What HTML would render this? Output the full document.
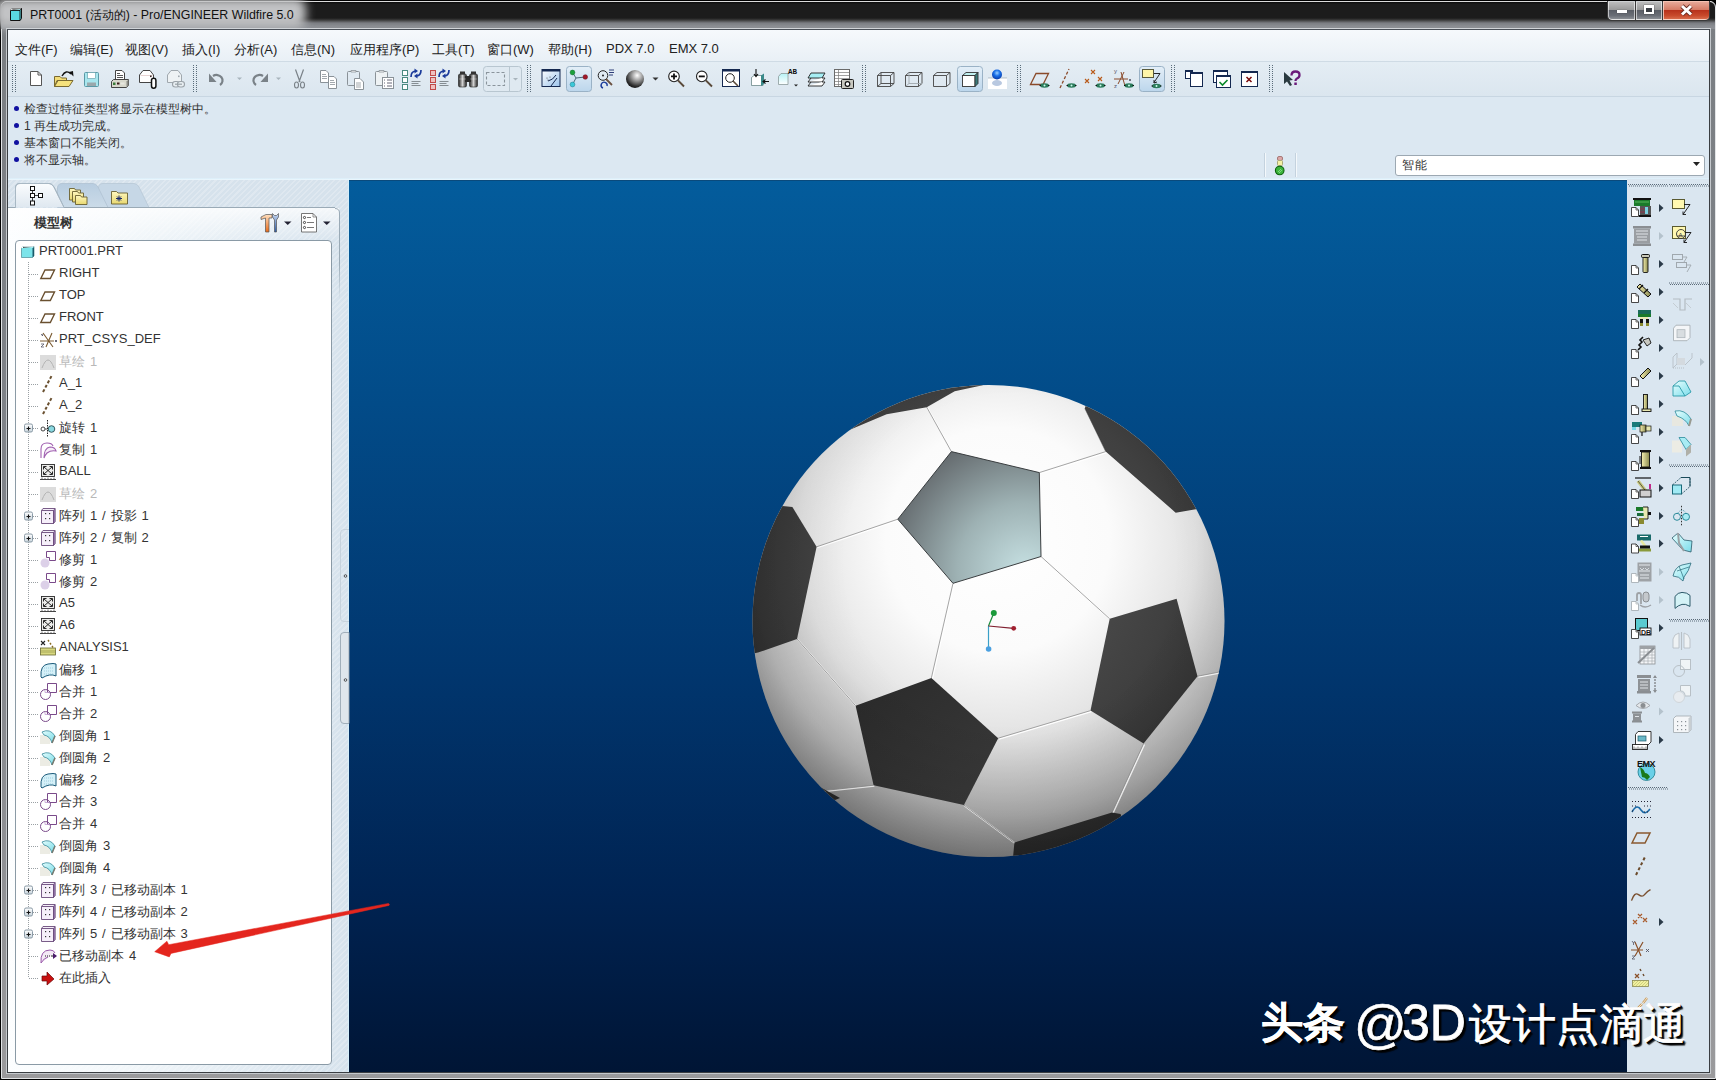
<!DOCTYPE html>
<html><head><meta charset="utf-8">
<style>
*{margin:0;padding:0;box-sizing:border-box}
html,body{width:1716px;height:1080px;overflow:hidden;background:#000}
body{position:relative;font-family:"Liberation Sans",sans-serif;font-size:12px;color:#1e1e1e}
.a{position:absolute}
#frame{left:0;top:0;width:1716px;height:1080px;background:#000}
#frame2{left:1px;top:1px;width:1715px;height:1078px;background:linear-gradient(#7a7e82 0%,#80848a 50%,#9a9a9c 100%);border:1px solid #e2e4e6;border-radius:6px 6px 0 0}
#titlebar{left:1px;top:1px;width:1714px;height:28px;border-top:1px solid #dcdcdc;border-radius:6px 6px 0 0;
 background:linear-gradient(#0a0a0a 0px,#1c1c1c 2px,#1c1c1c 16px,#3a3a3a 18px,#7a7d82 21px,#8a8d92 24px,#8d9095 27px)}
#glow{left:-6px;top:-2px;width:312px;height:30px;background:#c2c3c5;filter:blur(5px);border-radius:10px}
#client{left:6px;top:28px;width:1705px;height:1046px;border:1px solid #c4c8cc;border-top-color:#d0d4d8}
#client2{left:7px;top:29px;width:1703px;height:1044px;border:1px solid #3a3e42;border-top-color:#4a5058}
#clientin{left:8px;top:30px;width:1701px;height:1042px;background:#dde8f1}
#menubar{left:8px;top:30px;width:1701px;height:31px;background:linear-gradient(#f6f9fc,#e9f0f6)}
#toolbar{left:8px;top:61px;width:1701px;height:36px;background:linear-gradient(#e4edf4,#dbe6ef);border-top:1px solid #cfdbe5;border-bottom:1px solid #c8d6e2}
#msg{left:8px;top:97px;width:1701px;height:82px;background:#dce8f2}
.menu{top:41px;font-size:13px;color:#222}
.msgl{left:24px;font-size:12px;color:#333}
.dot{left:14px;width:5px;height:5px;border-radius:50%;background:#1010a0}
#tree{left:8px;top:179px;width:341px;height:893px;border-top:1px solid #eef6fb;background:#d6e2ec}
#treeg{left:8px;top:208px;width:341px;height:864px;background:linear-gradient(90deg,#fcfeff 0%,#f2f7fa 35%,#dce7f0 85%,#d6e2ec 100%)}
#hatch{left:8px;top:180px;width:341px;height:892px;background:repeating-linear-gradient(-45deg,rgba(255,255,255,.22) 0 1.5px,rgba(255,255,255,0) 1.5px 4px)}
#treebox{left:15px;top:240px;width:317px;height:825px;background:#fff;border:1px solid #8a9aa6;border-radius:4px}
#view{left:349px;top:180px;width:1278px;height:892px;border-top:1px solid #0a4a7c;background:linear-gradient(#035c9c 0%,#024b88 25%,#01366e 55%,#002352 80%,#001535 100%)}
#msgline{left:8px;top:178px;width:1701px;height:2px;background:linear-gradient(#d8ecf8,#eef8fd)}
#rtool{left:1627px;top:179px;width:82px;height:893px;background:#dae6f0}
.ti{left:59px;font-size:13px;color:#333;white-space:nowrap;word-spacing:1.3px}
.tg{color:#b8b8b8}
</style></head><body>
<div id="frame" class="a"></div>
<div id="frame2" class="a"></div>
<div id="titlebar" class="a"></div>
<div id="glow" class="a"></div>
<svg class="a" style="left:8px;top:7px" width="16" height="16"><path d="M2.5,3.5 L4,1.5 H13.5 V11.5 L12,13.5 H2.5 Z" fill="#5ad8e0" stroke="#111" stroke-width="1"/><path d="M3,3.5 L4.2,2 H13" stroke="#fff" stroke-width="1.2"/><path d="M12,3.5 V13.5 M2.5,3.5 H12 L13.5,1.5" fill="none" stroke="#111" stroke-width="0.9"/></svg>
<div class="a" style="left:30px;top:7px;font-size:12.4px;color:#111;white-space:nowrap">PRT0001 (活动的) - Pro/ENGINEER Wildfire 5.0</div>
<div id="client" class="a"></div>
<div id="client2" class="a"></div>
<div id="clientin" class="a"></div>
<div id="menubar" class="a"></div>
<div id="toolbar" class="a"></div>
<div id="msg" class="a"></div>
<div id="tree" class="a"></div>
<div id="treeg" class="a"></div>
<div id="hatch" class="a"></div>
<div id="treebox" class="a"></div>
<div id="msgline" class="a"></div>
<div id="view" class="a"></div>
<div class="a" style="left:348px;top:180px;width:1px;height:892px;background:#d4eefa"></div>
<div class="a" style="left:1627px;top:180px;width:1px;height:892px;background:#e2f4fc"></div>
<div id="rtool" class="a"></div>
<svg class="a" style="left:0;top:0" width="1716" height="100" viewBox="0 0 1716 100"><defs>
<linearGradient id="selbtn" x1="0" y1="0" x2="0" y2="1"><stop offset="0" stop-color="#e4eff8"/><stop offset="1" stop-color="#bcd6ec"/></linearGradient>
<radialGradient id="sph" cx="0.62" cy="0.3" r="0.75"><stop offset="0" stop-color="#ffffff"/><stop offset="0.35" stop-color="#a8a8a8"/><stop offset="0.8" stop-color="#303030"/><stop offset="1" stop-color="#101010"/></radialGradient>
<radialGradient id="bsph" cx="0.5" cy="0.35" r="0.6"><stop offset="0" stop-color="#9ad0ff"/><stop offset="0.5" stop-color="#1a70e8"/><stop offset="1" stop-color="#0a40b0"/></radialGradient>
<linearGradient id="binoc" x1="0" y1="0" x2="1" y2="0"><stop offset="0" stop-color="#202020"/><stop offset="0.5" stop-color="#d0d0d0"/><stop offset="1" stop-color="#202020"/></linearGradient>
<linearGradient id="winb" x1="0" y1="0" x2="1" y2="1"><stop offset="0" stop-color="#ffffff"/><stop offset="1" stop-color="#9cc4ec"/></linearGradient>
<linearGradient id="cyanl" x1="0" y1="0" x2="0" y2="1"><stop offset="0" stop-color="#b6f2f6"/><stop offset="1" stop-color="#ffffff"/></linearGradient>
<pattern id="hatch" width="2" height="2" patternUnits="userSpaceOnUse"><rect width="2" height="2" fill="#c8ccd0"/><rect width="1" height="1" fill="#9aa0a6"/><rect x="1" y="1" width="1" height="1" fill="#9aa0a6"/></pattern>
</defs><rect x="12" y="65" width="1" height="1" fill="#5a6c7a"/><rect x="15" y="65" width="1" height="1" fill="#5a6c7a"/><rect x="12" y="67" width="1" height="1" fill="#5a6c7a"/><rect x="15" y="67" width="1" height="1" fill="#5a6c7a"/><rect x="12" y="69" width="1" height="1" fill="#5a6c7a"/><rect x="15" y="69" width="1" height="1" fill="#5a6c7a"/><rect x="12" y="71" width="1" height="1" fill="#5a6c7a"/><rect x="15" y="71" width="1" height="1" fill="#5a6c7a"/><rect x="12" y="73" width="1" height="1" fill="#5a6c7a"/><rect x="15" y="73" width="1" height="1" fill="#5a6c7a"/><rect x="12" y="75" width="1" height="1" fill="#5a6c7a"/><rect x="15" y="75" width="1" height="1" fill="#5a6c7a"/><rect x="12" y="77" width="1" height="1" fill="#5a6c7a"/><rect x="15" y="77" width="1" height="1" fill="#5a6c7a"/><rect x="12" y="79" width="1" height="1" fill="#5a6c7a"/><rect x="15" y="79" width="1" height="1" fill="#5a6c7a"/><rect x="12" y="81" width="1" height="1" fill="#5a6c7a"/><rect x="15" y="81" width="1" height="1" fill="#5a6c7a"/><rect x="12" y="83" width="1" height="1" fill="#5a6c7a"/><rect x="15" y="83" width="1" height="1" fill="#5a6c7a"/><rect x="12" y="85" width="1" height="1" fill="#5a6c7a"/><rect x="15" y="85" width="1" height="1" fill="#5a6c7a"/><rect x="12" y="87" width="1" height="1" fill="#5a6c7a"/><rect x="15" y="87" width="1" height="1" fill="#5a6c7a"/><rect x="12" y="89" width="1" height="1" fill="#5a6c7a"/><rect x="15" y="89" width="1" height="1" fill="#5a6c7a"/><rect x="12" y="91" width="1" height="1" fill="#5a6c7a"/><rect x="15" y="91" width="1" height="1" fill="#5a6c7a"/><rect x="193" y="65" width="1" height="1" fill="#5a6c7a"/><rect x="196" y="65" width="1" height="1" fill="#5a6c7a"/><rect x="193" y="67" width="1" height="1" fill="#5a6c7a"/><rect x="196" y="67" width="1" height="1" fill="#5a6c7a"/><rect x="193" y="69" width="1" height="1" fill="#5a6c7a"/><rect x="196" y="69" width="1" height="1" fill="#5a6c7a"/><rect x="193" y="71" width="1" height="1" fill="#5a6c7a"/><rect x="196" y="71" width="1" height="1" fill="#5a6c7a"/><rect x="193" y="73" width="1" height="1" fill="#5a6c7a"/><rect x="196" y="73" width="1" height="1" fill="#5a6c7a"/><rect x="193" y="75" width="1" height="1" fill="#5a6c7a"/><rect x="196" y="75" width="1" height="1" fill="#5a6c7a"/><rect x="193" y="77" width="1" height="1" fill="#5a6c7a"/><rect x="196" y="77" width="1" height="1" fill="#5a6c7a"/><rect x="193" y="79" width="1" height="1" fill="#5a6c7a"/><rect x="196" y="79" width="1" height="1" fill="#5a6c7a"/><rect x="193" y="81" width="1" height="1" fill="#5a6c7a"/><rect x="196" y="81" width="1" height="1" fill="#5a6c7a"/><rect x="193" y="83" width="1" height="1" fill="#5a6c7a"/><rect x="196" y="83" width="1" height="1" fill="#5a6c7a"/><rect x="193" y="85" width="1" height="1" fill="#5a6c7a"/><rect x="196" y="85" width="1" height="1" fill="#5a6c7a"/><rect x="193" y="87" width="1" height="1" fill="#5a6c7a"/><rect x="196" y="87" width="1" height="1" fill="#5a6c7a"/><rect x="193" y="89" width="1" height="1" fill="#5a6c7a"/><rect x="196" y="89" width="1" height="1" fill="#5a6c7a"/><rect x="193" y="91" width="1" height="1" fill="#5a6c7a"/><rect x="196" y="91" width="1" height="1" fill="#5a6c7a"/><rect x="527" y="65" width="1" height="1" fill="#5a6c7a"/><rect x="530" y="65" width="1" height="1" fill="#5a6c7a"/><rect x="527" y="67" width="1" height="1" fill="#5a6c7a"/><rect x="530" y="67" width="1" height="1" fill="#5a6c7a"/><rect x="527" y="69" width="1" height="1" fill="#5a6c7a"/><rect x="530" y="69" width="1" height="1" fill="#5a6c7a"/><rect x="527" y="71" width="1" height="1" fill="#5a6c7a"/><rect x="530" y="71" width="1" height="1" fill="#5a6c7a"/><rect x="527" y="73" width="1" height="1" fill="#5a6c7a"/><rect x="530" y="73" width="1" height="1" fill="#5a6c7a"/><rect x="527" y="75" width="1" height="1" fill="#5a6c7a"/><rect x="530" y="75" width="1" height="1" fill="#5a6c7a"/><rect x="527" y="77" width="1" height="1" fill="#5a6c7a"/><rect x="530" y="77" width="1" height="1" fill="#5a6c7a"/><rect x="527" y="79" width="1" height="1" fill="#5a6c7a"/><rect x="530" y="79" width="1" height="1" fill="#5a6c7a"/><rect x="527" y="81" width="1" height="1" fill="#5a6c7a"/><rect x="530" y="81" width="1" height="1" fill="#5a6c7a"/><rect x="527" y="83" width="1" height="1" fill="#5a6c7a"/><rect x="530" y="83" width="1" height="1" fill="#5a6c7a"/><rect x="527" y="85" width="1" height="1" fill="#5a6c7a"/><rect x="530" y="85" width="1" height="1" fill="#5a6c7a"/><rect x="527" y="87" width="1" height="1" fill="#5a6c7a"/><rect x="530" y="87" width="1" height="1" fill="#5a6c7a"/><rect x="527" y="89" width="1" height="1" fill="#5a6c7a"/><rect x="530" y="89" width="1" height="1" fill="#5a6c7a"/><rect x="527" y="91" width="1" height="1" fill="#5a6c7a"/><rect x="530" y="91" width="1" height="1" fill="#5a6c7a"/><rect x="862" y="65" width="1" height="1" fill="#5a6c7a"/><rect x="865" y="65" width="1" height="1" fill="#5a6c7a"/><rect x="862" y="67" width="1" height="1" fill="#5a6c7a"/><rect x="865" y="67" width="1" height="1" fill="#5a6c7a"/><rect x="862" y="69" width="1" height="1" fill="#5a6c7a"/><rect x="865" y="69" width="1" height="1" fill="#5a6c7a"/><rect x="862" y="71" width="1" height="1" fill="#5a6c7a"/><rect x="865" y="71" width="1" height="1" fill="#5a6c7a"/><rect x="862" y="73" width="1" height="1" fill="#5a6c7a"/><rect x="865" y="73" width="1" height="1" fill="#5a6c7a"/><rect x="862" y="75" width="1" height="1" fill="#5a6c7a"/><rect x="865" y="75" width="1" height="1" fill="#5a6c7a"/><rect x="862" y="77" width="1" height="1" fill="#5a6c7a"/><rect x="865" y="77" width="1" height="1" fill="#5a6c7a"/><rect x="862" y="79" width="1" height="1" fill="#5a6c7a"/><rect x="865" y="79" width="1" height="1" fill="#5a6c7a"/><rect x="862" y="81" width="1" height="1" fill="#5a6c7a"/><rect x="865" y="81" width="1" height="1" fill="#5a6c7a"/><rect x="862" y="83" width="1" height="1" fill="#5a6c7a"/><rect x="865" y="83" width="1" height="1" fill="#5a6c7a"/><rect x="862" y="85" width="1" height="1" fill="#5a6c7a"/><rect x="865" y="85" width="1" height="1" fill="#5a6c7a"/><rect x="862" y="87" width="1" height="1" fill="#5a6c7a"/><rect x="865" y="87" width="1" height="1" fill="#5a6c7a"/><rect x="862" y="89" width="1" height="1" fill="#5a6c7a"/><rect x="865" y="89" width="1" height="1" fill="#5a6c7a"/><rect x="862" y="91" width="1" height="1" fill="#5a6c7a"/><rect x="865" y="91" width="1" height="1" fill="#5a6c7a"/><rect x="1017" y="65" width="1" height="1" fill="#5a6c7a"/><rect x="1020" y="65" width="1" height="1" fill="#5a6c7a"/><rect x="1017" y="67" width="1" height="1" fill="#5a6c7a"/><rect x="1020" y="67" width="1" height="1" fill="#5a6c7a"/><rect x="1017" y="69" width="1" height="1" fill="#5a6c7a"/><rect x="1020" y="69" width="1" height="1" fill="#5a6c7a"/><rect x="1017" y="71" width="1" height="1" fill="#5a6c7a"/><rect x="1020" y="71" width="1" height="1" fill="#5a6c7a"/><rect x="1017" y="73" width="1" height="1" fill="#5a6c7a"/><rect x="1020" y="73" width="1" height="1" fill="#5a6c7a"/><rect x="1017" y="75" width="1" height="1" fill="#5a6c7a"/><rect x="1020" y="75" width="1" height="1" fill="#5a6c7a"/><rect x="1017" y="77" width="1" height="1" fill="#5a6c7a"/><rect x="1020" y="77" width="1" height="1" fill="#5a6c7a"/><rect x="1017" y="79" width="1" height="1" fill="#5a6c7a"/><rect x="1020" y="79" width="1" height="1" fill="#5a6c7a"/><rect x="1017" y="81" width="1" height="1" fill="#5a6c7a"/><rect x="1020" y="81" width="1" height="1" fill="#5a6c7a"/><rect x="1017" y="83" width="1" height="1" fill="#5a6c7a"/><rect x="1020" y="83" width="1" height="1" fill="#5a6c7a"/><rect x="1017" y="85" width="1" height="1" fill="#5a6c7a"/><rect x="1020" y="85" width="1" height="1" fill="#5a6c7a"/><rect x="1017" y="87" width="1" height="1" fill="#5a6c7a"/><rect x="1020" y="87" width="1" height="1" fill="#5a6c7a"/><rect x="1017" y="89" width="1" height="1" fill="#5a6c7a"/><rect x="1020" y="89" width="1" height="1" fill="#5a6c7a"/><rect x="1017" y="91" width="1" height="1" fill="#5a6c7a"/><rect x="1020" y="91" width="1" height="1" fill="#5a6c7a"/><rect x="1171" y="65" width="1" height="1" fill="#5a6c7a"/><rect x="1174" y="65" width="1" height="1" fill="#5a6c7a"/><rect x="1171" y="67" width="1" height="1" fill="#5a6c7a"/><rect x="1174" y="67" width="1" height="1" fill="#5a6c7a"/><rect x="1171" y="69" width="1" height="1" fill="#5a6c7a"/><rect x="1174" y="69" width="1" height="1" fill="#5a6c7a"/><rect x="1171" y="71" width="1" height="1" fill="#5a6c7a"/><rect x="1174" y="71" width="1" height="1" fill="#5a6c7a"/><rect x="1171" y="73" width="1" height="1" fill="#5a6c7a"/><rect x="1174" y="73" width="1" height="1" fill="#5a6c7a"/><rect x="1171" y="75" width="1" height="1" fill="#5a6c7a"/><rect x="1174" y="75" width="1" height="1" fill="#5a6c7a"/><rect x="1171" y="77" width="1" height="1" fill="#5a6c7a"/><rect x="1174" y="77" width="1" height="1" fill="#5a6c7a"/><rect x="1171" y="79" width="1" height="1" fill="#5a6c7a"/><rect x="1174" y="79" width="1" height="1" fill="#5a6c7a"/><rect x="1171" y="81" width="1" height="1" fill="#5a6c7a"/><rect x="1174" y="81" width="1" height="1" fill="#5a6c7a"/><rect x="1171" y="83" width="1" height="1" fill="#5a6c7a"/><rect x="1174" y="83" width="1" height="1" fill="#5a6c7a"/><rect x="1171" y="85" width="1" height="1" fill="#5a6c7a"/><rect x="1174" y="85" width="1" height="1" fill="#5a6c7a"/><rect x="1171" y="87" width="1" height="1" fill="#5a6c7a"/><rect x="1174" y="87" width="1" height="1" fill="#5a6c7a"/><rect x="1171" y="89" width="1" height="1" fill="#5a6c7a"/><rect x="1174" y="89" width="1" height="1" fill="#5a6c7a"/><rect x="1171" y="91" width="1" height="1" fill="#5a6c7a"/><rect x="1174" y="91" width="1" height="1" fill="#5a6c7a"/><rect x="1269" y="65" width="1" height="1" fill="#5a6c7a"/><rect x="1272" y="65" width="1" height="1" fill="#5a6c7a"/><rect x="1269" y="67" width="1" height="1" fill="#5a6c7a"/><rect x="1272" y="67" width="1" height="1" fill="#5a6c7a"/><rect x="1269" y="69" width="1" height="1" fill="#5a6c7a"/><rect x="1272" y="69" width="1" height="1" fill="#5a6c7a"/><rect x="1269" y="71" width="1" height="1" fill="#5a6c7a"/><rect x="1272" y="71" width="1" height="1" fill="#5a6c7a"/><rect x="1269" y="73" width="1" height="1" fill="#5a6c7a"/><rect x="1272" y="73" width="1" height="1" fill="#5a6c7a"/><rect x="1269" y="75" width="1" height="1" fill="#5a6c7a"/><rect x="1272" y="75" width="1" height="1" fill="#5a6c7a"/><rect x="1269" y="77" width="1" height="1" fill="#5a6c7a"/><rect x="1272" y="77" width="1" height="1" fill="#5a6c7a"/><rect x="1269" y="79" width="1" height="1" fill="#5a6c7a"/><rect x="1272" y="79" width="1" height="1" fill="#5a6c7a"/><rect x="1269" y="81" width="1" height="1" fill="#5a6c7a"/><rect x="1272" y="81" width="1" height="1" fill="#5a6c7a"/><rect x="1269" y="83" width="1" height="1" fill="#5a6c7a"/><rect x="1272" y="83" width="1" height="1" fill="#5a6c7a"/><rect x="1269" y="85" width="1" height="1" fill="#5a6c7a"/><rect x="1272" y="85" width="1" height="1" fill="#5a6c7a"/><rect x="1269" y="87" width="1" height="1" fill="#5a6c7a"/><rect x="1272" y="87" width="1" height="1" fill="#5a6c7a"/><rect x="1269" y="89" width="1" height="1" fill="#5a6c7a"/><rect x="1272" y="89" width="1" height="1" fill="#5a6c7a"/><rect x="1269" y="91" width="1" height="1" fill="#5a6c7a"/><rect x="1272" y="91" width="1" height="1" fill="#5a6c7a"/><path d="M30.5,71.5 H38 L41.5,75 V85.5 H30.5 Z" fill="#fff" stroke="#555" stroke-width="1"/><path d="M38,71.5 V75 H41.5" fill="none" stroke="#555"/><path d="M54.5,76.5 H60 L61.5,78 H66.5 V80.5 H57 L54.5,86.5 Z" fill="#f2dc78" stroke="#7a6a30"/><path d="M54.5,86.5 L58,80.5 H73 L69,86.5 Z" fill="#f6e27c" stroke="#7a6a30"/><path d="M62,76 Q66,69 71,74" fill="none" stroke="#111" stroke-width="1.4"/><path d="M69,72 L73.5,76.5 L73,71 Z" fill="#111"/><rect x="84.5" y="72.5" width="14" height="14" rx="1" fill="#a8e6ee" stroke="#5a98a6"/><rect x="87.5" y="72.5" width="8" height="6" fill="#fff" stroke="#5a98a6" stroke-width="0.6"/><rect x="87" y="82.5" width="9" height="3.5" fill="#9aa8ac"/><path d="M115.5,70.5 H122 L124.5,73 V81.5 H115.5 Z" fill="#fff" stroke="#444"/><path d="M117,73.5h3M117,75.5h6M117,77.5h6" stroke="#444" stroke-width="0.9"/><path d="M111.5,81.5 L113.5,79.5 H128.5 V85.5 L126.5,87.5 H111.5 Z" fill="#d8d8cc" stroke="#444"/><path d="M126.5,81.5 L128.5,79.5 V85.5 L126.5,87.5 Z" fill="#8a8a84"/><rect x="113" y="82.5" width="2.5" height="2.5" fill="#3a7a3a"/><rect x="117" y="82.5" width="2.5" height="2" fill="#3a1a1a"/><rect x="120.5" y="82.5" width="4" height="2" fill="#e8e8e0"/><path d="M139.5,75 L143,70.5 H150 L153.5,75 V82.5 H139.5 Z" fill="#fff" stroke="#444"/><path d="M140.5,75.5h12" stroke="#e0c8c8" stroke-width="0.8"/><rect x="150" y="75.5" width="1.6" height="1.6" fill="#3a2a2a"/><path d="M151.5,79.5 V86 a2.2,2.2 0 0 0 4.4,0 V80.5 a2.2,2.2 0 0 0 -4.4,0" fill="#fff" stroke="#111" stroke-width="1.5"/><path d="M167.5,75 L171,70.5 H178 L181.5,75 V82.5 H167.5 Z" fill="#eef2f4" stroke="#a0a8ae"/><rect x="178" y="75.5" width="1.6" height="1.6" fill="#a0a8ae"/><rect x="172.5" y="81.5" width="7" height="5.5" rx="2.75" fill="#e8eef2" stroke="#9aa2a8" stroke-width="1.1"/><rect x="177.5" y="81.5" width="7" height="5.5" rx="2.75" fill="#e8eef2" stroke="#9aa2a8" stroke-width="1.1"/><path d="M175,84.2h7" stroke="#9aa2a8" stroke-width="1.2"/><path d="M213,76 A6,5.5 0 1 1 220,85" fill="none" stroke="#7a8288" stroke-width="2.2"/><path d="M209,73.5 L209,82 L216.5,82 Z" fill="#7a8288"/><path d="M237,77.5 h5 l-2.5,2.5 z" fill="#a8b4bc"/><path d="M263,76 A6,5.5 0 1 0 256,85" fill="none" stroke="#7a8288" stroke-width="2.2"/><path d="M268,73.5 L268,82 L260.5,82 Z" fill="#7a8288"/><path d="M276,77.5 h5 l-2.5,2.5 z" fill="#a8b4bc"/><path d="M295.5,69.5 L300,82 M303.5,69.5 L299,82" stroke="#7a8288" stroke-width="1.2" fill="none"/><ellipse cx="296.5" cy="85" rx="2" ry="3" fill="none" stroke="#7a8288" stroke-width="1.1"/><ellipse cx="302.5" cy="85" rx="2" ry="3" fill="none" stroke="#7a8288" stroke-width="1.1"/><path d="M320.5,70.5 H326 L328.5,73 V82.5 H320.5 Z" fill="#fff" stroke="#8a9298"/><path d="M322,74.5h4M322,76.5h5M322,78.5h5" stroke="#8a9298" stroke-width="0.8"/><path d="M328.5,76.5 H334 L336.5,79 V88.5 H328.5 Z" fill="#fff" stroke="#8a9298"/><path d="M330,80.5h4M330,82.5h5M330,84.5h5" stroke="#8a9298" stroke-width="0.8"/><rect x="347.5" y="71.5" width="12" height="14" rx="1" fill="url(#hatch)" stroke="#8a9298"/><path d="M351,72 h5 v-1.5 h-5 z" fill="#fff" stroke="#8a9298" stroke-width="0.8"/><path d="M354.5,78.5 H360 L363.5,82 V89.5 H354.5 Z" fill="#fff" stroke="#8a9298"/><path d="M356,83h5M356,85h5M356,87h5" stroke="#8a9298" stroke-width="0.8"/><rect x="375.5" y="71.5" width="12" height="14" rx="1" fill="#eef2f4" stroke="#8a9298"/><path d="M379,72 h5 v-1.5 h-5 z" fill="#fff" stroke="#8a9298" stroke-width="0.8"/><rect x="382.5" y="77.5" width="11" height="11" fill="#fff" stroke="#8a9298"/><path d="M384,80h1M387,80h5M384,83h1M387,83h5M384,86h1M387,86h5" stroke="#556" stroke-width="0.9"/><rect x="402.5" y="70.5" width="5" height="5" fill="#ffffff" stroke="#4a8a80" stroke-width="1"/><rect x="402.5" y="77.5" width="5" height="5" fill="#ffffff" stroke="#4a8a80" stroke-width="1"/><rect x="402.5" y="84.5" width="5" height="5" fill="#ffffff" stroke="#4a8a80" stroke-width="1"/><path d="M411,77 Q411,71.5 415.5,71" fill="none" stroke="#1a3a9a" stroke-width="1.7"/><path d="M414.5,68.5 L418,71 L414.5,73.5 Z" fill="#1a3a9a"/><path d="M421,70 Q421,75.5 416.5,76" fill="none" stroke="#1a3a9a" stroke-width="1.7"/><path d="M417.5,73.5 L414,76 L417.5,78.5 Z" fill="#1a3a9a"/><path d="M411.5,81.5h9M411.5,83.5h7M411.5,85.5h9" stroke="#7a8288" stroke-width="0.9"/><rect x="430.5" y="70.5" width="5" height="5" fill="#f0c0c0" stroke="#c04a4a" stroke-width="1"/><rect x="430.5" y="77.5" width="5" height="5" fill="#f0c0c0" stroke="#c04a4a" stroke-width="1"/><rect x="430.5" y="84.5" width="5" height="5" fill="#f0c0c0" stroke="#c04a4a" stroke-width="1"/><path d="M439,77 Q439,71.5 443.5,71" fill="none" stroke="#1a3a9a" stroke-width="1.7"/><path d="M442.5,68.5 L446,71 L442.5,73.5 Z" fill="#1a3a9a"/><path d="M449,70 Q449,75.5 444.5,76" fill="none" stroke="#1a3a9a" stroke-width="1.7"/><path d="M445.5,73.5 L442,76 L445.5,78.5 Z" fill="#1a3a9a"/><path d="M439.5,81.5h9M439.5,83.5h7M439.5,85.5h9" stroke="#7a8288" stroke-width="0.9"/><rect x="458.5" y="74" width="8" height="13" rx="1.5" fill="url(#binoc)" stroke="#222" stroke-width="0.6"/><rect x="469.5" y="74" width="8" height="13" rx="1.5" fill="url(#binoc)" stroke="#222" stroke-width="0.6"/><rect x="465" y="76" width="6" height="6" fill="#2a2a2a"/><rect x="460" y="71.5" width="5" height="3" fill="#333"/><rect x="471" y="71.5" width="5" height="3" fill="#333"/><path d="M459,79h7M470,79h7" stroke="#fff" stroke-width="0.6" opacity="0.5"/><rect x="483.5" y="66.5" width="38" height="25" rx="3" fill="#dfe9f1" stroke="#b8c6d0"/><path d="M509.5,67 V91" stroke="#b8c6d0"/><rect x="486.5" y="72.5" width="18" height="13" fill="none" stroke="#8a949c" stroke-width="1.1" stroke-dasharray="3,2"/><path d="M513,78 h5 l-2.5,2.5z" fill="#a8b4bc"/><rect x="542" y="69.5" width="18" height="17" fill="url(#winb)" stroke="#142850" stroke-width="1"/><rect x="542" y="69" width="18" height="2.5" fill="#142850"/><path d="M548,81 q5,-1 8,-6 M551,86 l6,-8" stroke="#142850" stroke-width="1" fill="none"/><circle cx="547" cy="78" r="0.6" fill="#555"/><circle cx="548" cy="80" r="0.6" fill="#555"/><circle cx="550" cy="77" r="0.6" fill="#555"/><rect x="566.5" y="66.5" width="25" height="25" rx="3" fill="url(#selbtn)" stroke="#9ab2c6"/><path d="M572.5,72.5 L576,78 L585.3,77 M576,78 L572.5,84.5" stroke="#3a5a6a" stroke-width="0.9" fill="none"/><circle cx="572.5" cy="72.5" r="2.4" fill="#1aa03a" stroke="#0a6a2a" stroke-width="0.5"/><circle cx="585.3" cy="77" r="2.3" fill="#a01a2a" stroke="#6a0a1a" stroke-width="0.5"/><circle cx="572.5" cy="84.5" r="2.4" fill="#3ac8d8" stroke="#1a7a8a" stroke-width="0.5"/><circle cx="603" cy="75.5" r="4.8" fill="none" stroke="#222" stroke-width="1"/><circle cx="603" cy="75.5" r="1" fill="#222"/><path d="M606,79 L612,85" stroke="#6a5040" stroke-width="1.8"/><path d="M609,70h5M609,72.5h5M609,75h4" stroke="#1a2a6a" stroke-width="0.9"/><path d="M603,88 a3,3 0 1 1 4,-2" fill="none" stroke="#1a3a9a" stroke-width="1.4"/><circle cx="635" cy="79" r="9" fill="url(#sph)"/><path d="M652.5,77.5 h6 l-3,3z" fill="#333"/><circle cx="674" cy="76.4" r="5.3" fill="#fff" stroke="#222" stroke-width="1.1"/><path d="M671,76.4h6M674,73.4v6" stroke="#111" stroke-width="1.8"/><path d="M678,80.4 L684,86.5" stroke="#5a4a3a" stroke-width="1.9"/><circle cx="701.8" cy="76.4" r="5.3" fill="#fff" stroke="#222" stroke-width="1.1"/><path d="M698.8,76.4h6" stroke="#111" stroke-width="1.8"/><path d="M705.8,80.4 L712,86.5" stroke="#5a4a3a" stroke-width="1.9"/><rect x="722.5" y="69.5" width="17" height="17" fill="#fff" stroke="#142850"/><rect x="722" y="69" width="18" height="2.5" fill="#142850"/><circle cx="730" cy="78" r="4.3" fill="none" stroke="#222" stroke-width="1"/><path d="M733,81 L738,86" stroke="#5a4a3a" stroke-width="1.6"/><path d="M751.5,77.5 L754,75.5 H763 V85.5 H751.5 Z" fill="#fff" stroke="#5a7a7a" stroke-width="0.7"/><path d="M761,75.5 L764,73.5 V84 L761,86z" fill="#3a8a8a"/><path d="M756,69 V76 M754,74 l2,2.5 2,-2.5" stroke="#111" stroke-width="1.1" fill="none"/><path d="M769,81.5 H763 M765.5,79.5 l-2.5,2 2.5,2" stroke="#111" stroke-width="1.1" fill="none"/><path d="M778.5,76.5 L781,73.5 H788 V84.5 H778.5 Z" fill="url(#cyanl)" stroke="#8a9a9a" stroke-width="0.8"/><text x="788" y="73.5" font-size="7.5" font-family="Liberation Mono" fill="#111" font-weight="bold">AB</text><path d="M794,84.5 h4 l-2,2z" fill="#222"/><path d="M808,78 L811,73 H825 L822,78 Z" fill="#a6eef4" stroke="#222" stroke-width="0.9"/><path d="M808,82 L811,78 M822,78 L825,78 L822,82 H808" fill="#fff" stroke="#222" stroke-width="0.9"/><path d="M808,86 L811,82 M822,82 L825,82 L822,86 H808" fill="#fff" stroke="#222" stroke-width="0.9"/><rect x="834.5" y="69.5" width="15" height="17" fill="#fff" stroke="#6a6a6a"/><path d="M835,72.5h14M835,75.5h14M835,78.5h14M835,81.5h14M835,84.5h14M838.5,70v16" stroke="#7a7a7a" stroke-width="0.7"/><rect x="841.5" y="79.5" width="12" height="9" rx="1" fill="#c8c8c0" stroke="#222"/><circle cx="847.5" cy="84" r="2.3" fill="#fff" stroke="#111" stroke-width="1.2"/><g fill="none" stroke="#444" stroke-width="0.9"><path d="M877.5,75.5 H890.5 V86.5 H877.5 Z"/><path d="M877.5,75.5 L881,72.5 H894 V83.5 L890.5,86.5 M890.5,75.5 L894,72.5"/></g><path d="M881,72.5 V83.5 H894 M881,83.5 L877.5,86.5" fill="none" stroke="#444" stroke-width="0.9"/><g fill="none" stroke="#444" stroke-width="0.9"><path d="M905.5,75.5 H918.5 V86.5 H905.5 Z"/><path d="M905.5,75.5 L909,72.5 H922 V83.5 L918.5,86.5 M918.5,75.5 L922,72.5"/></g><path d="M909,72.5 V83.5 H922 M909,83.5 L905.5,86.5" fill="none" stroke="#a0a8ae" stroke-width="0.9"/><g fill="none" stroke="#444" stroke-width="0.9"><path d="M933.5,75.5 H946.5 V86.5 H933.5 Z"/><path d="M933.5,75.5 L937,72.5 H950 V83.5 L946.5,86.5 M946.5,75.5 L950,72.5"/></g><rect x="957.5" y="66.5" width="25" height="25" rx="3" fill="url(#selbtn)" stroke="#9ab2c6"/><path d="M962.5,75.5 L966,72.5 H978 L975,75.5 Z" fill="#c0f0f0" stroke="#333" stroke-width="0.9"/><rect x="962.5" y="75.5" width="12.5" height="11" fill="#fff" stroke="#333" stroke-width="0.9"/><path d="M975,75.5 L978,72.5 V83.5 L975,86.5 Z" fill="#3a7a7a" stroke="#333" stroke-width="0.9"/><rect x="988" y="78" width="19" height="11" fill="#fff"/><path d="M988,78h19" stroke="#8a9aa8" stroke-width="0.6"/><ellipse cx="997" cy="83" rx="5" ry="3" fill="#b8c8e0"/><circle cx="997" cy="74.5" r="5" fill="url(#bsph)"/><path d="M1030.5,84.5 L1036,73.5 H1048.5 L1043,84.5 Z" fill="none" stroke="#8a4a2a" stroke-width="1.3"/><ellipse cx="1044.5" cy="85.5" rx="4.5" ry="2.2" fill="#2a7a5a"/><path d="M1039.5,85.5 h1.5 M1048.0,85.5 h1.5" stroke="#111" stroke-width="1.2"/><circle cx="1044.5" cy="85.5" r="1" fill="#cfe"/><path d="M1060,88 L1069,69" stroke="#8a4a2a" stroke-width="1.3" stroke-dasharray="3,2" fill="none"/><ellipse cx="1071.5" cy="85.5" rx="4.5" ry="2.2" fill="#2a7a5a"/><path d="M1066.5,85.5 h1.5 M1075.0,85.5 h1.5" stroke="#111" stroke-width="1.2"/><circle cx="1071.5" cy="85.5" r="1" fill="#cfe"/><g stroke="#b85a1a" stroke-width="1.1"><path d="M1091,70l4,4M1095,70l-4,4M1085,79l4,4M1089,79l-4,4M1098,77l4,4M1102,77l-4,4"/></g><ellipse cx="1100.5" cy="85.5" rx="4.5" ry="2.2" fill="#2a7a5a"/><path d="M1095.5,85.5 h1.5 M1104.0,85.5 h1.5" stroke="#111" stroke-width="1.2"/><circle cx="1100.5" cy="85.5" r="1" fill="#cfe"/><g stroke="#8a4a2a" stroke-width="1"><path d="M1114,79h14M1121,72l4,14M1124,72l-6,12"/></g><text x="1114" y="73" font-size="6" fill="#556">y</text><text x="1114" y="88" font-size="6" fill="#556">z</text><path d="M1129,79l2,2m0,-2l-2,2" stroke="#556" stroke-width="0.8"/><ellipse cx="1129" cy="85.5" rx="4.5" ry="2.2" fill="#2a7a5a"/><path d="M1124,85.5 h1.5 M1132.5,85.5 h1.5" stroke="#111" stroke-width="1.2"/><circle cx="1129" cy="85.5" r="1" fill="#cfe"/><rect x="1139.5" y="66.5" width="25" height="25" rx="3" fill="url(#selbtn)" stroke="#9ab2c6"/><rect x="1142.5" y="69.5" width="11" height="8" fill="#fff6a8" stroke="#5a5a3a"/><path d="M1154,73.5h6l-6,9 M1154,83 l0,-3 M1154,83 l3,-1" stroke="#111" stroke-width="0.9" fill="none"/><ellipse cx="1156.5" cy="86" rx="4.5" ry="2.2" fill="#2a7a5a"/><path d="M1151.5,86 h1.5 M1160.0,86 h1.5" stroke="#111" stroke-width="1.2"/><circle cx="1156.5" cy="86" r="1" fill="#cfe"/><rect x="1185.5" y="70.5" width="7" height="8" fill="#fff" stroke="#142850"/><rect x="1185" y="70" width="8" height="2" fill="#142850"/><rect x="1190.5" y="72.5" width="12" height="14" fill="#fff" stroke="#142850"/><rect x="1190" y="72" width="13" height="2" fill="#142850"/><rect x="1213.5" y="70.5" width="14" height="12" fill="#fff" stroke="#142850"/><rect x="1213" y="70" width="15" height="2" fill="#142850"/><rect x="1216.5" y="75.5" width="14" height="12" fill="#fff" stroke="#142850"/><rect x="1216" y="75" width="15" height="2" fill="#142850"/><path d="M1219.5,82 l3,3 5,-5" stroke="#0a8a2a" stroke-width="1.6" fill="none"/><rect x="1241.5" y="71.5" width="16" height="15" fill="#fff" stroke="#142850"/><rect x="1241" y="71" width="17" height="2" fill="#142850"/><path d="M1246.5,77 l5,5 m0,-5 l-5,5" stroke="#7a0a0a" stroke-width="1.5"/><path d="M1284,72 L1284,84 L1287,81.5 L1290,86 L1292,85 L1289.5,80.5 L1293,80 Z" fill="#2a3a40"/><path d="M1291.5,75.5 Q1291.5,71.5 1295.5,71.5 Q1299.5,71.5 1299.5,75 Q1299.5,77.5 1297,78.5 Q1295.5,79.2 1295.5,81" fill="none" stroke="#6a1a7a" stroke-width="2.3"/><rect x="1294.3" y="82.5" width="2.5" height="2.5" fill="#6a1a7a"/></svg>
<svg class="a" style="left:0;top:0" width="360" height="1080" viewBox="0 0 360 1080"><defs>
<linearGradient id="tab1" x1="0" y1="0" x2="0" y2="1"><stop offset="0" stop-color="#fafcfe"/><stop offset="1" stop-color="#dfe8f0"/></linearGradient>
<linearGradient id="tab2" x1="0" y1="0" x2="0" y2="1"><stop offset="0" stop-color="#b8cde0"/><stop offset="1" stop-color="#cbdbe8"/></linearGradient>
<linearGradient id="hdr" x1="0" y1="0" x2="0" y2="1"><stop offset="0" stop-color="#ffffff" stop-opacity="0.75"/><stop offset="1" stop-color="#ffffff" stop-opacity="0"/></linearGradient>
<linearGradient id="exp" x1="0" y1="0" x2="0" y2="1"><stop offset="0" stop-color="#ffffff"/><stop offset="1" stop-color="#c8d4dc"/></linearGradient>
<linearGradient id="fold" x1="0" y1="0" x2="0" y2="1"><stop offset="0" stop-color="#fff8c0"/><stop offset="1" stop-color="#e8d870"/></linearGradient>
<linearGradient id="hammer" x1="0" y1="0" x2="0" y2="1"><stop offset="0" stop-color="#ffe0c0"/><stop offset="1" stop-color="#e86a1a"/></linearGradient>
<linearGradient id="wrench" x1="0" y1="0" x2="0" y2="1"><stop offset="0" stop-color="#c8d8f0"/><stop offset="1" stop-color="#2a5aa8"/></linearGradient>
<linearGradient id="cyanq" x1="0" y1="0" x2="1" y2="1"><stop offset="0" stop-color="#e8ffff"/><stop offset="1" stop-color="#70d8e4"/></linearGradient>
</defs><rect x="9" y="208" width="330" height="32" fill="url(#hdr)"/><path d="M98.5,207.5 L98.5,188 Q98.5,183.5 103,183.5 H134 Q137,183.5 139,187 L149,207.5 Z" fill="#c6d7e6" stroke="#b8c8d6" stroke-width="0.8"/><path d="M57.5,207.5 L57.5,188 Q57.5,183.5 62,183.5 H93 Q96,183.5 98,187 L108,207.5 Z" fill="url(#tab2)" stroke="#b0c2d2" stroke-width="0.8"/><path d="M8,207.5 H15.5 V188 Q15.5,183.5 20,183.5 H49 Q52,183.5 54,187 L64,207.5 H335" fill="none" stroke="#9aaab6" stroke-width="1"/><path d="M16,207 V188 Q16,184 20,184 H49 Q51.5,184 53.5,187.5 L63.5,207 Z" fill="url(#tab1)"/><path d="M15.5,207.5 V188 Q15.5,183.5 20,183.5 H49 Q52,183.5 54,187 L64,207.5" fill="none" stroke="#a8b8c4" stroke-width="1"/><g fill="#fff" stroke="#111" stroke-width="1"><rect x="30.5" y="186.5" width="4" height="4"/><rect x="30.5" y="193.5" width="4" height="4"/><rect x="30.5" y="201" width="4" height="4"/><rect x="38.5" y="193.5" width="4" height="4"/></g><path d="M32.5,190.5v3M32.5,197.5v3.5M34.5,195.5h4" stroke="#111" stroke-width="0.8"/><g fill="url(#fold)" stroke="#6a6030" stroke-width="0.9"><path d="M69.5,188.5 h5 l1,1.5 h5 v10 h-11 z"/><path d="M72.5,191.5 h5 l1,1.5 h5 v9 h-11 z"/><path d="M75.5,195.5 h5 l1,1.5 h5.5 v7.5 h-11.5 z"/></g><path d="M111.5,191.5 h5 l1.5,1.5 h9.5 v11 h-16 z" fill="url(#fold)" stroke="#6a6030" stroke-width="0.9"/><path d="M116,198.5h6M119,195.5v6M117,196.5l4,4M121,196.5l-4,4" stroke="#1a2a6a" stroke-width="1"/><linearGradient id="fadeb" x1="0" y1="208" x2="0" y2="300" gradientUnits="userSpaceOnUse"><stop offset="0" stop-color="#9aaab6"/><stop offset="0.6" stop-color="#9aaab6"/><stop offset="1" stop-color="#9aaab6" stop-opacity="0"/></linearGradient><path d="M335,208.5 Q339.5,208.5 339.5,213 V300" fill="none" stroke="url(#fadeb)" stroke-width="1"/><path d="M261,217 L266,214.5 H272 V218 H269 V232 H265.5 V218 L261,219.5 Z" fill="url(#hammer)" stroke="#555" stroke-width="0.7"/><path d="M274.5,232 V220 L272.5,217 V213.5 L274.5,215.5 H276.5 L278.5,213.5 V217 L276.5,220 V232 Z" fill="url(#wrench)" stroke="#555" stroke-width="0.7"/><path d="M284,221.5 h7.5 l-3.75,3.5z" fill="#223"/><path d="M301.5,213.5 H313 L316.5,217 V232 H301.5 Z" fill="#fff" stroke="#666" stroke-width="0.9"/><path d="M313,213.5 V217 H316.5" fill="none" stroke="#666" stroke-width="0.7"/><circle cx="304.5" cy="217.5" r="1.1" fill="none" stroke="#333" stroke-width="0.9"/><circle cx="304.5" cy="222.5" r="1.1" fill="none" stroke="#333" stroke-width="0.9"/><circle cx="304.5" cy="227.5" r="1.1" fill="none" stroke="#333" stroke-width="0.9"/><path d="M307,217.5h4M307,222.5h7M307,227.5h7" stroke="#555" stroke-width="0.8"/><path d="M323,221.5 h7.5 l-3.75,3.5z" fill="#223"/><path d="M28.5,262 V978" stroke="#9aa0a4" stroke-width="1" stroke-dasharray="1,1"/><path d="M29,274.5 H38" stroke="#9aa0a4" stroke-width="1" stroke-dasharray="1,1"/><path d="M29,296.5 H38" stroke="#9aa0a4" stroke-width="1" stroke-dasharray="1,1"/><path d="M29,318.5 H38" stroke="#9aa0a4" stroke-width="1" stroke-dasharray="1,1"/><path d="M29,340.5 H38" stroke="#9aa0a4" stroke-width="1" stroke-dasharray="1,1"/><path d="M29,362.5 H38" stroke="#9aa0a4" stroke-width="1" stroke-dasharray="1,1"/><path d="M29,384.5 H38" stroke="#9aa0a4" stroke-width="1" stroke-dasharray="1,1"/><path d="M29,406.5 H38" stroke="#9aa0a4" stroke-width="1" stroke-dasharray="1,1"/><path d="M33,428.5 H38" stroke="#9aa0a4" stroke-width="1" stroke-dasharray="1,1"/><path d="M29,450.5 H38" stroke="#9aa0a4" stroke-width="1" stroke-dasharray="1,1"/><path d="M29,472.5 H38" stroke="#9aa0a4" stroke-width="1" stroke-dasharray="1,1"/><path d="M29,494.5 H38" stroke="#9aa0a4" stroke-width="1" stroke-dasharray="1,1"/><path d="M33,516.5 H38" stroke="#9aa0a4" stroke-width="1" stroke-dasharray="1,1"/><path d="M33,538.5 H38" stroke="#9aa0a4" stroke-width="1" stroke-dasharray="1,1"/><path d="M29,560.5 H38" stroke="#9aa0a4" stroke-width="1" stroke-dasharray="1,1"/><path d="M29,582.5 H38" stroke="#9aa0a4" stroke-width="1" stroke-dasharray="1,1"/><path d="M29,604.5 H38" stroke="#9aa0a4" stroke-width="1" stroke-dasharray="1,1"/><path d="M29,626.5 H38" stroke="#9aa0a4" stroke-width="1" stroke-dasharray="1,1"/><path d="M29,648.5 H38" stroke="#9aa0a4" stroke-width="1" stroke-dasharray="1,1"/><path d="M29,670.5 H38" stroke="#9aa0a4" stroke-width="1" stroke-dasharray="1,1"/><path d="M29,692.5 H38" stroke="#9aa0a4" stroke-width="1" stroke-dasharray="1,1"/><path d="M29,714.5 H38" stroke="#9aa0a4" stroke-width="1" stroke-dasharray="1,1"/><path d="M29,736.5 H38" stroke="#9aa0a4" stroke-width="1" stroke-dasharray="1,1"/><path d="M29,758.5 H38" stroke="#9aa0a4" stroke-width="1" stroke-dasharray="1,1"/><path d="M29,780.5 H38" stroke="#9aa0a4" stroke-width="1" stroke-dasharray="1,1"/><path d="M29,802.5 H38" stroke="#9aa0a4" stroke-width="1" stroke-dasharray="1,1"/><path d="M29,824.5 H38" stroke="#9aa0a4" stroke-width="1" stroke-dasharray="1,1"/><path d="M29,846.5 H38" stroke="#9aa0a4" stroke-width="1" stroke-dasharray="1,1"/><path d="M29,868.5 H38" stroke="#9aa0a4" stroke-width="1" stroke-dasharray="1,1"/><path d="M33,890.5 H38" stroke="#9aa0a4" stroke-width="1" stroke-dasharray="1,1"/><path d="M33,912.5 H38" stroke="#9aa0a4" stroke-width="1" stroke-dasharray="1,1"/><path d="M33,934.5 H38" stroke="#9aa0a4" stroke-width="1" stroke-dasharray="1,1"/><path d="M29,956.5 H38" stroke="#9aa0a4" stroke-width="1" stroke-dasharray="1,1"/><path d="M29,978.5 H38" stroke="#9aa0a4" stroke-width="1" stroke-dasharray="1,1"/><rect x="24.5" y="886" width="8" height="8" rx="1.5" fill="url(#exp)" stroke="#8a9aa6" stroke-width="1"/><path d="M26.5,890.5h4M28.5,888.5v4" stroke="#111" stroke-width="1.1"/><rect x="24.5" y="424" width="8" height="8" rx="1.5" fill="url(#exp)" stroke="#8a9aa6" stroke-width="1"/><path d="M26.5,428.5h4M28.5,426.5v4" stroke="#111" stroke-width="1.1"/><rect x="24.5" y="512" width="8" height="8" rx="1.5" fill="url(#exp)" stroke="#8a9aa6" stroke-width="1"/><path d="M26.5,516.5h4M28.5,514.5v4" stroke="#111" stroke-width="1.1"/><rect x="24.5" y="534" width="8" height="8" rx="1.5" fill="url(#exp)" stroke="#8a9aa6" stroke-width="1"/><path d="M26.5,538.5h4M28.5,536.5v4" stroke="#111" stroke-width="1.1"/><rect x="24.5" y="908" width="8" height="8" rx="1.5" fill="url(#exp)" stroke="#8a9aa6" stroke-width="1"/><path d="M26.5,912.5h4M28.5,910.5v4" stroke="#111" stroke-width="1.1"/><rect x="24.5" y="930" width="8" height="8" rx="1.5" fill="url(#exp)" stroke="#8a9aa6" stroke-width="1"/><path d="M26.5,934.5h4M28.5,932.5v4" stroke="#111" stroke-width="1.1"/><path d="M21.5,248.5 L23,246.5 H34 V256 L32.5,257.5 H21.5 Z" fill="#7ce4ea" stroke="#4a8a94" stroke-width="0.7"/><path d="M32.5,248.5 L34,246.5 V256 L32.5,257.5 Z" fill="#1a5a6a"/><path d="M22,248 L23.2,246.8 H33.5" stroke="#fff" stroke-width="1"/><path d="M40.8,278.5 L45,270 H54.5 L50.3,278.5 Z" fill="none" stroke="#6a5030" stroke-width="1.4"/><path d="M40.8,300.5 L45,292 H54.5 L50.3,300.5 Z" fill="none" stroke="#6a5030" stroke-width="1.4"/><path d="M40.8,322.5 L45,314 H54.5 L50.3,322.5 Z" fill="none" stroke="#6a5030" stroke-width="1.4"/><path d="M40,341h14M43,333l10,14M52,333l-6,14" stroke="#7a5a30" stroke-width="1.1"/><path d="M41,334l2,2M43,334l-1,2" stroke="#445" stroke-width="0.7"/><path d="M55,340l2,2m0,-2l-2,2" stroke="#445" stroke-width="0.8"/><path d="M41,344h3l-3,3h3" stroke="#445" stroke-width="0.7" fill="none"/><rect x="40" y="355" width="16" height="15" fill="#dcdcdc"/><path d="M42,368 Q48,352 54,368" fill="none" stroke="#b4b4b4" stroke-width="1"/><path d="M43,392 L51.5,376" stroke="#6a5030" stroke-width="2" stroke-dasharray="3,2"/><path d="M43,414 L51.5,398" stroke="#6a5030" stroke-width="2" stroke-dasharray="3,2"/><circle cx="43" cy="429" r="2" fill="none" stroke="#333" stroke-width="0.9"/><path d="M45,429h2.5" stroke="#333" stroke-width="0.8"/><circle cx="51.5" cy="429" r="3.3" fill="#8ad8e0" stroke="#2a4a50" stroke-width="0.9"/><path d="M47.5,420V437" stroke="#222" stroke-width="1" stroke-dasharray="1.5,1"/><path d="M41,458 V449 Q41,443 47,443 Q52,443 53,446" fill="none" stroke="#a060b0" stroke-width="1.1"/><path d="M44,458 Q44,448 50,447 Q55,447 56,451 Q51,450 47,453 Q45,455 44,458Z" fill="#f6eef8" stroke="#a060b0" stroke-width="1.1"/><rect x="41.5" y="464.5" width="13" height="12" fill="#ececea" stroke="#2a2a2a" stroke-width="0.9"/><path d="M44,467l8,7M52,467l-8,7" stroke="#111" stroke-width="0.9"/><path d="M43.5,466.5h3M43.5,466.5v3M52.5,466.5h-3M52.5,466.5v3M43.5,474.5h3M43.5,474.5v-3M52.5,474.5h-3M52.5,474.5v-3" stroke="#111" stroke-width="0.9"/><path d="M40,479.5h16" stroke="#333" stroke-width="0.9"/><path d="M42,477.5v2M45,478v1.5M48,477.5v2M51,478v1.5M54,477.5v2" stroke="#333" stroke-width="0.7"/><rect x="40" y="487" width="16" height="15" fill="#dcdcdc"/><path d="M42,500 Q48,484 54,500" fill="none" stroke="#b4b4b4" stroke-width="1"/><path d="M41.5,510.5 L43,508.5 H55 V521.5 L53.5,523.5 H41.5 Z" fill="#f6effa" stroke="#6a4a7a" stroke-width="0.9"/><path d="M53.5,510.5 L55,508.5 V521.5 L53.5,523.5 Z" fill="#a080b8" stroke="#6a4a7a" stroke-width="0.6"/><path d="M41.5,510.5H53.5V523.5" fill="none" stroke="#6a4a7a" stroke-width="0.9"/><g fill="#333"><rect x="45" y="513" width="1.2" height="1.2"/><rect x="49" y="513" width="1.2" height="1.2"/><rect x="45" y="518" width="1.2" height="1.2"/><rect x="49" y="518" width="1.2" height="1.2"/></g><path d="M41.5,532.5 L43,530.5 H55 V543.5 L53.5,545.5 H41.5 Z" fill="#f6effa" stroke="#6a4a7a" stroke-width="0.9"/><path d="M53.5,532.5 L55,530.5 V543.5 L53.5,545.5 Z" fill="#a080b8" stroke="#6a4a7a" stroke-width="0.6"/><path d="M41.5,532.5H53.5V545.5" fill="none" stroke="#6a4a7a" stroke-width="0.9"/><g fill="#333"><rect x="45" y="535" width="1.2" height="1.2"/><rect x="49" y="535" width="1.2" height="1.2"/><rect x="45" y="540" width="1.2" height="1.2"/><rect x="49" y="540" width="1.2" height="1.2"/></g><path d="M46.5,551.5 H55.5 V560.5 H49.5 V557.5 H46.5 Z" fill="#fff" stroke="#7a4a8a" stroke-width="1"/><circle cx="45" cy="563" r="4.5" fill="#dcd0e8"/><path d="M46.5,573.5 H55.5 V582.5 H49.5 V579.5 H46.5 Z" fill="#fff" stroke="#7a4a8a" stroke-width="1"/><circle cx="45" cy="585" r="4.5" fill="#dcd0e8"/><rect x="41.5" y="596.5" width="13" height="12" fill="#ececea" stroke="#2a2a2a" stroke-width="0.9"/><path d="M44,599l8,7M52,599l-8,7" stroke="#111" stroke-width="0.9"/><path d="M43.5,598.5h3M43.5,598.5v3M52.5,598.5h-3M52.5,598.5v3M43.5,606.5h3M43.5,606.5v-3M52.5,606.5h-3M52.5,606.5v-3" stroke="#111" stroke-width="0.9"/><path d="M40,611.5h16" stroke="#333" stroke-width="0.9"/><path d="M42,609.5v2M45,610v1.5M48,609.5v2M51,610v1.5M54,609.5v2" stroke="#333" stroke-width="0.7"/><rect x="41.5" y="618.5" width="13" height="12" fill="#ececea" stroke="#2a2a2a" stroke-width="0.9"/><path d="M44,621l8,7M52,621l-8,7" stroke="#111" stroke-width="0.9"/><path d="M43.5,620.5h3M43.5,620.5v3M52.5,620.5h-3M52.5,620.5v3M43.5,628.5h3M43.5,628.5v-3M52.5,628.5h-3M52.5,628.5v-3" stroke="#111" stroke-width="0.9"/><path d="M40,633.5h16" stroke="#333" stroke-width="0.9"/><path d="M42,631.5v2M45,632v1.5M48,631.5v2M51,632v1.5M54,631.5v2" stroke="#333" stroke-width="0.7"/><path d="M41,641l4,4m0,-4l-4,4" stroke="#222" stroke-width="1.1"/><path d="M48,640l1,1.5M50,643l1,1.5M52,646l1,1.5" stroke="#8a6a20" stroke-width="1.4"/><rect x="40.5" y="648" width="15" height="7" fill="#d8d880" stroke="#6a6a30" stroke-width="0.8"/><path d="M42,650v3M44,650v3M46,650v3M48,650v3M50,650v3M52,650v3M54,650v3" stroke="#8a8a40" stroke-width="0.6"/><path d="M41,677 Q40,665 48,664 Q54,663 56,664 V676 Q50,673 42,678 Z" fill="#d4f0f8" stroke="#1a5a7a" stroke-width="1"/><path d="M44,668h10M44,671h10M44,674h9" stroke="#7ab8d0" stroke-width="0.6" stroke-dasharray="1,1"/><path d="M47.5,683.5 H56.5 V692.5 H47.5 Z" fill="#fff" stroke="#7a4a8a" stroke-width="1"/><circle cx="45.5" cy="694.5" r="5" fill="none" stroke="#7a4a8a" stroke-width="1"/><path d="M45,690V692.5H50" fill="none" stroke="#c0a0d0" stroke-width="0.8"/><path d="M47.5,705.5 H56.5 V714.5 H47.5 Z" fill="#fff" stroke="#7a4a8a" stroke-width="1"/><circle cx="45.5" cy="716.5" r="5" fill="none" stroke="#7a4a8a" stroke-width="1"/><path d="M45,712V714.5H50" fill="none" stroke="#c0a0d0" stroke-width="0.8"/><rect x="40" y="735" width="10" height="9" fill="#ecece4"/><path d="M42,732 Q50,728 55,736 L52,743 Q50,736 44,735 Z" fill="url(#cyanq)" stroke="#3a8a9a" stroke-width="0.8"/><path d="M52,743 L55,736" stroke="#7a7a70" stroke-width="1.5"/><rect x="40" y="757" width="10" height="9" fill="#ecece4"/><path d="M42,754 Q50,750 55,758 L52,765 Q50,758 44,757 Z" fill="url(#cyanq)" stroke="#3a8a9a" stroke-width="0.8"/><path d="M52,765 L55,758" stroke="#7a7a70" stroke-width="1.5"/><path d="M41,787 Q40,775 48,774 Q54,773 56,774 V786 Q50,783 42,788 Z" fill="#d4f0f8" stroke="#1a5a7a" stroke-width="1"/><path d="M44,778h10M44,781h10M44,784h9" stroke="#7ab8d0" stroke-width="0.6" stroke-dasharray="1,1"/><path d="M47.5,793.5 H56.5 V802.5 H47.5 Z" fill="#fff" stroke="#7a4a8a" stroke-width="1"/><circle cx="45.5" cy="804.5" r="5" fill="none" stroke="#7a4a8a" stroke-width="1"/><path d="M45,800V802.5H50" fill="none" stroke="#c0a0d0" stroke-width="0.8"/><path d="M47.5,815.5 H56.5 V824.5 H47.5 Z" fill="#fff" stroke="#7a4a8a" stroke-width="1"/><circle cx="45.5" cy="826.5" r="5" fill="none" stroke="#7a4a8a" stroke-width="1"/><path d="M45,822V824.5H50" fill="none" stroke="#c0a0d0" stroke-width="0.8"/><rect x="40" y="845" width="10" height="9" fill="#ecece4"/><path d="M42,842 Q50,838 55,846 L52,853 Q50,846 44,845 Z" fill="url(#cyanq)" stroke="#3a8a9a" stroke-width="0.8"/><path d="M52,853 L55,846" stroke="#7a7a70" stroke-width="1.5"/><rect x="40" y="867" width="10" height="9" fill="#ecece4"/><path d="M42,864 Q50,860 55,868 L52,875 Q50,868 44,867 Z" fill="url(#cyanq)" stroke="#3a8a9a" stroke-width="0.8"/><path d="M52,875 L55,868" stroke="#7a7a70" stroke-width="1.5"/><path d="M41.5,884.5 L43,882.5 H55 V895.5 L53.5,897.5 H41.5 Z" fill="#f6effa" stroke="#6a4a7a" stroke-width="0.9"/><path d="M53.5,884.5 L55,882.5 V895.5 L53.5,897.5 Z" fill="#a080b8" stroke="#6a4a7a" stroke-width="0.6"/><path d="M41.5,884.5H53.5V897.5" fill="none" stroke="#6a4a7a" stroke-width="0.9"/><g fill="#333"><rect x="45" y="887" width="1.2" height="1.2"/><rect x="49" y="887" width="1.2" height="1.2"/><rect x="45" y="892" width="1.2" height="1.2"/><rect x="49" y="892" width="1.2" height="1.2"/></g><path d="M41.5,906.5 L43,904.5 H55 V917.5 L53.5,919.5 H41.5 Z" fill="#f6effa" stroke="#6a4a7a" stroke-width="0.9"/><path d="M53.5,906.5 L55,904.5 V917.5 L53.5,919.5 Z" fill="#a080b8" stroke="#6a4a7a" stroke-width="0.6"/><path d="M41.5,906.5H53.5V919.5" fill="none" stroke="#6a4a7a" stroke-width="0.9"/><g fill="#333"><rect x="45" y="909" width="1.2" height="1.2"/><rect x="49" y="909" width="1.2" height="1.2"/><rect x="45" y="914" width="1.2" height="1.2"/><rect x="49" y="914" width="1.2" height="1.2"/></g><path d="M41.5,928.5 L43,926.5 H55 V939.5 L53.5,941.5 H41.5 Z" fill="#f6effa" stroke="#6a4a7a" stroke-width="0.9"/><path d="M53.5,928.5 L55,926.5 V939.5 L53.5,941.5 Z" fill="#a080b8" stroke="#6a4a7a" stroke-width="0.6"/><path d="M41.5,928.5H53.5V941.5" fill="none" stroke="#6a4a7a" stroke-width="0.9"/><g fill="#333"><rect x="45" y="931" width="1.2" height="1.2"/><rect x="49" y="931" width="1.2" height="1.2"/><rect x="45" y="936" width="1.2" height="1.2"/><rect x="49" y="936" width="1.2" height="1.2"/></g><path d="M41,963 Q40,950 50,950 Q54,950 55,953" fill="#f4eaf6" stroke="#9a5aaa" stroke-width="1"/><path d="M41,963 Q44,958 48,957" fill="none" stroke="#9a5aaa" stroke-width="1"/><path d="M45,956h1M47,956h1M49,956h1M51,956h2" stroke="#222" stroke-width="1.1"/><path d="M53,953 l4,3 -4,3z" fill="#4a1a6a"/><path d="M42,976 H47 V972 L54,979 L47,985 V981 H42 Z" fill="#c81010" stroke="#6a0a0a" stroke-width="0.7"/><path d="M349,529.5 H344 Q340.5,529.5 340.5,533 V618 Q340.5,621.5 344,621.5 H349" fill="none" stroke="#c4d0da" stroke-width="0.9"/><circle cx="345.5" cy="576" r="1.3" fill="none" stroke="#333" stroke-width="0.8"/><path d="M349,632.5 H344 Q340.5,632.5 340.5,636 V720 Q340.5,723.5 344,723.5 H349 Z" fill="#dfe6ec" stroke="#9aa8b4" stroke-width="0.9"/><circle cx="345.5" cy="680" r="1.3" fill="none" stroke="#333" stroke-width="0.8"/></svg>
<svg class="a" style="left:0;top:0" width="1716" height="1080" viewBox="0 0 1716 1080"><defs>
<linearGradient id="rbrass" x1="0" y1="0" x2="1" y2="0"><stop offset="0" stop-color="#f6f0b0"/><stop offset="1" stop-color="#8a8a50"/></linearGradient>
<linearGradient id="rcyan" x1="0" y1="0" x2="1" y2="1"><stop offset="0" stop-color="#e8ffff"/><stop offset="1" stop-color="#7adcea"/></linearGradient>
<pattern id="rhatch" width="3" height="3" patternUnits="userSpaceOnUse"><rect width="3" height="3" fill="#f0f0a0"/><path d="M0,3 L3,0" stroke="#b8b860" stroke-width="0.6"/></pattern>
</defs><rect x="1628" y="184" width="1" height="1" fill="#5a6a78"/><rect x="1629" y="185.5" width="1" height="1" fill="#5a6a78"/><rect x="1630" y="184" width="1" height="1" fill="#5a6a78"/><rect x="1631" y="185.5" width="1" height="1" fill="#5a6a78"/><rect x="1632" y="184" width="1" height="1" fill="#5a6a78"/><rect x="1633" y="185.5" width="1" height="1" fill="#5a6a78"/><rect x="1634" y="184" width="1" height="1" fill="#5a6a78"/><rect x="1635" y="185.5" width="1" height="1" fill="#5a6a78"/><rect x="1636" y="184" width="1" height="1" fill="#5a6a78"/><rect x="1637" y="185.5" width="1" height="1" fill="#5a6a78"/><rect x="1638" y="184" width="1" height="1" fill="#5a6a78"/><rect x="1639" y="185.5" width="1" height="1" fill="#5a6a78"/><rect x="1640" y="184" width="1" height="1" fill="#5a6a78"/><rect x="1641" y="185.5" width="1" height="1" fill="#5a6a78"/><rect x="1642" y="184" width="1" height="1" fill="#5a6a78"/><rect x="1643" y="185.5" width="1" height="1" fill="#5a6a78"/><rect x="1644" y="184" width="1" height="1" fill="#5a6a78"/><rect x="1645" y="185.5" width="1" height="1" fill="#5a6a78"/><rect x="1646" y="184" width="1" height="1" fill="#5a6a78"/><rect x="1647" y="185.5" width="1" height="1" fill="#5a6a78"/><rect x="1648" y="184" width="1" height="1" fill="#5a6a78"/><rect x="1649" y="185.5" width="1" height="1" fill="#5a6a78"/><rect x="1650" y="184" width="1" height="1" fill="#5a6a78"/><rect x="1651" y="185.5" width="1" height="1" fill="#5a6a78"/><rect x="1652" y="184" width="1" height="1" fill="#5a6a78"/><rect x="1653" y="185.5" width="1" height="1" fill="#5a6a78"/><rect x="1654" y="184" width="1" height="1" fill="#5a6a78"/><rect x="1655" y="185.5" width="1" height="1" fill="#5a6a78"/><rect x="1656" y="184" width="1" height="1" fill="#5a6a78"/><rect x="1657" y="185.5" width="1" height="1" fill="#5a6a78"/><rect x="1658" y="184" width="1" height="1" fill="#5a6a78"/><rect x="1659" y="185.5" width="1" height="1" fill="#5a6a78"/><rect x="1660" y="184" width="1" height="1" fill="#5a6a78"/><rect x="1661" y="185.5" width="1" height="1" fill="#5a6a78"/><rect x="1662" y="184" width="1" height="1" fill="#5a6a78"/><rect x="1663" y="185.5" width="1" height="1" fill="#5a6a78"/><rect x="1664" y="184" width="1" height="1" fill="#5a6a78"/><rect x="1665" y="185.5" width="1" height="1" fill="#5a6a78"/><rect x="1666" y="184" width="1" height="1" fill="#5a6a78"/><rect x="1667" y="185.5" width="1" height="1" fill="#5a6a78"/><rect x="1669" y="184" width="1" height="1" fill="#5a6a78"/><rect x="1670" y="185.5" width="1" height="1" fill="#5a6a78"/><rect x="1671" y="184" width="1" height="1" fill="#5a6a78"/><rect x="1672" y="185.5" width="1" height="1" fill="#5a6a78"/><rect x="1673" y="184" width="1" height="1" fill="#5a6a78"/><rect x="1674" y="185.5" width="1" height="1" fill="#5a6a78"/><rect x="1675" y="184" width="1" height="1" fill="#5a6a78"/><rect x="1676" y="185.5" width="1" height="1" fill="#5a6a78"/><rect x="1677" y="184" width="1" height="1" fill="#5a6a78"/><rect x="1678" y="185.5" width="1" height="1" fill="#5a6a78"/><rect x="1679" y="184" width="1" height="1" fill="#5a6a78"/><rect x="1680" y="185.5" width="1" height="1" fill="#5a6a78"/><rect x="1681" y="184" width="1" height="1" fill="#5a6a78"/><rect x="1682" y="185.5" width="1" height="1" fill="#5a6a78"/><rect x="1683" y="184" width="1" height="1" fill="#5a6a78"/><rect x="1684" y="185.5" width="1" height="1" fill="#5a6a78"/><rect x="1685" y="184" width="1" height="1" fill="#5a6a78"/><rect x="1686" y="185.5" width="1" height="1" fill="#5a6a78"/><rect x="1687" y="184" width="1" height="1" fill="#5a6a78"/><rect x="1688" y="185.5" width="1" height="1" fill="#5a6a78"/><rect x="1689" y="184" width="1" height="1" fill="#5a6a78"/><rect x="1690" y="185.5" width="1" height="1" fill="#5a6a78"/><rect x="1691" y="184" width="1" height="1" fill="#5a6a78"/><rect x="1692" y="185.5" width="1" height="1" fill="#5a6a78"/><rect x="1693" y="184" width="1" height="1" fill="#5a6a78"/><rect x="1694" y="185.5" width="1" height="1" fill="#5a6a78"/><rect x="1695" y="184" width="1" height="1" fill="#5a6a78"/><rect x="1696" y="185.5" width="1" height="1" fill="#5a6a78"/><rect x="1697" y="184" width="1" height="1" fill="#5a6a78"/><rect x="1698" y="185.5" width="1" height="1" fill="#5a6a78"/><rect x="1699" y="184" width="1" height="1" fill="#5a6a78"/><rect x="1700" y="185.5" width="1" height="1" fill="#5a6a78"/><rect x="1701" y="184" width="1" height="1" fill="#5a6a78"/><rect x="1702" y="185.5" width="1" height="1" fill="#5a6a78"/><rect x="1703" y="184" width="1" height="1" fill="#5a6a78"/><rect x="1704" y="185.5" width="1" height="1" fill="#5a6a78"/><rect x="1705" y="184" width="1" height="1" fill="#5a6a78"/><rect x="1706" y="185.5" width="1" height="1" fill="#5a6a78"/><rect x="1707" y="184" width="1" height="1" fill="#5a6a78"/><rect x="1708" y="185.5" width="1" height="1" fill="#5a6a78"/><rect x="1669" y="282.5" width="1" height="1" fill="#5a6a78"/><rect x="1670" y="284.0" width="1" height="1" fill="#5a6a78"/><rect x="1671" y="282.5" width="1" height="1" fill="#5a6a78"/><rect x="1672" y="284.0" width="1" height="1" fill="#5a6a78"/><rect x="1673" y="282.5" width="1" height="1" fill="#5a6a78"/><rect x="1674" y="284.0" width="1" height="1" fill="#5a6a78"/><rect x="1675" y="282.5" width="1" height="1" fill="#5a6a78"/><rect x="1676" y="284.0" width="1" height="1" fill="#5a6a78"/><rect x="1677" y="282.5" width="1" height="1" fill="#5a6a78"/><rect x="1678" y="284.0" width="1" height="1" fill="#5a6a78"/><rect x="1679" y="282.5" width="1" height="1" fill="#5a6a78"/><rect x="1680" y="284.0" width="1" height="1" fill="#5a6a78"/><rect x="1681" y="282.5" width="1" height="1" fill="#5a6a78"/><rect x="1682" y="284.0" width="1" height="1" fill="#5a6a78"/><rect x="1683" y="282.5" width="1" height="1" fill="#5a6a78"/><rect x="1684" y="284.0" width="1" height="1" fill="#5a6a78"/><rect x="1685" y="282.5" width="1" height="1" fill="#5a6a78"/><rect x="1686" y="284.0" width="1" height="1" fill="#5a6a78"/><rect x="1687" y="282.5" width="1" height="1" fill="#5a6a78"/><rect x="1688" y="284.0" width="1" height="1" fill="#5a6a78"/><rect x="1689" y="282.5" width="1" height="1" fill="#5a6a78"/><rect x="1690" y="284.0" width="1" height="1" fill="#5a6a78"/><rect x="1691" y="282.5" width="1" height="1" fill="#5a6a78"/><rect x="1692" y="284.0" width="1" height="1" fill="#5a6a78"/><rect x="1693" y="282.5" width="1" height="1" fill="#5a6a78"/><rect x="1694" y="284.0" width="1" height="1" fill="#5a6a78"/><rect x="1695" y="282.5" width="1" height="1" fill="#5a6a78"/><rect x="1696" y="284.0" width="1" height="1" fill="#5a6a78"/><rect x="1697" y="282.5" width="1" height="1" fill="#5a6a78"/><rect x="1698" y="284.0" width="1" height="1" fill="#5a6a78"/><rect x="1699" y="282.5" width="1" height="1" fill="#5a6a78"/><rect x="1700" y="284.0" width="1" height="1" fill="#5a6a78"/><rect x="1701" y="282.5" width="1" height="1" fill="#5a6a78"/><rect x="1702" y="284.0" width="1" height="1" fill="#5a6a78"/><rect x="1703" y="282.5" width="1" height="1" fill="#5a6a78"/><rect x="1704" y="284.0" width="1" height="1" fill="#5a6a78"/><rect x="1705" y="282.5" width="1" height="1" fill="#5a6a78"/><rect x="1706" y="284.0" width="1" height="1" fill="#5a6a78"/><rect x="1707" y="282.5" width="1" height="1" fill="#5a6a78"/><rect x="1708" y="284.0" width="1" height="1" fill="#5a6a78"/><rect x="1669" y="464.5" width="1" height="1" fill="#5a6a78"/><rect x="1670" y="466.0" width="1" height="1" fill="#5a6a78"/><rect x="1671" y="464.5" width="1" height="1" fill="#5a6a78"/><rect x="1672" y="466.0" width="1" height="1" fill="#5a6a78"/><rect x="1673" y="464.5" width="1" height="1" fill="#5a6a78"/><rect x="1674" y="466.0" width="1" height="1" fill="#5a6a78"/><rect x="1675" y="464.5" width="1" height="1" fill="#5a6a78"/><rect x="1676" y="466.0" width="1" height="1" fill="#5a6a78"/><rect x="1677" y="464.5" width="1" height="1" fill="#5a6a78"/><rect x="1678" y="466.0" width="1" height="1" fill="#5a6a78"/><rect x="1679" y="464.5" width="1" height="1" fill="#5a6a78"/><rect x="1680" y="466.0" width="1" height="1" fill="#5a6a78"/><rect x="1681" y="464.5" width="1" height="1" fill="#5a6a78"/><rect x="1682" y="466.0" width="1" height="1" fill="#5a6a78"/><rect x="1683" y="464.5" width="1" height="1" fill="#5a6a78"/><rect x="1684" y="466.0" width="1" height="1" fill="#5a6a78"/><rect x="1685" y="464.5" width="1" height="1" fill="#5a6a78"/><rect x="1686" y="466.0" width="1" height="1" fill="#5a6a78"/><rect x="1687" y="464.5" width="1" height="1" fill="#5a6a78"/><rect x="1688" y="466.0" width="1" height="1" fill="#5a6a78"/><rect x="1689" y="464.5" width="1" height="1" fill="#5a6a78"/><rect x="1690" y="466.0" width="1" height="1" fill="#5a6a78"/><rect x="1691" y="464.5" width="1" height="1" fill="#5a6a78"/><rect x="1692" y="466.0" width="1" height="1" fill="#5a6a78"/><rect x="1693" y="464.5" width="1" height="1" fill="#5a6a78"/><rect x="1694" y="466.0" width="1" height="1" fill="#5a6a78"/><rect x="1695" y="464.5" width="1" height="1" fill="#5a6a78"/><rect x="1696" y="466.0" width="1" height="1" fill="#5a6a78"/><rect x="1697" y="464.5" width="1" height="1" fill="#5a6a78"/><rect x="1698" y="466.0" width="1" height="1" fill="#5a6a78"/><rect x="1699" y="464.5" width="1" height="1" fill="#5a6a78"/><rect x="1700" y="466.0" width="1" height="1" fill="#5a6a78"/><rect x="1701" y="464.5" width="1" height="1" fill="#5a6a78"/><rect x="1702" y="466.0" width="1" height="1" fill="#5a6a78"/><rect x="1703" y="464.5" width="1" height="1" fill="#5a6a78"/><rect x="1704" y="466.0" width="1" height="1" fill="#5a6a78"/><rect x="1705" y="464.5" width="1" height="1" fill="#5a6a78"/><rect x="1706" y="466.0" width="1" height="1" fill="#5a6a78"/><rect x="1707" y="464.5" width="1" height="1" fill="#5a6a78"/><rect x="1708" y="466.0" width="1" height="1" fill="#5a6a78"/><rect x="1669" y="619" width="1" height="1" fill="#5a6a78"/><rect x="1670" y="620.5" width="1" height="1" fill="#5a6a78"/><rect x="1671" y="619" width="1" height="1" fill="#5a6a78"/><rect x="1672" y="620.5" width="1" height="1" fill="#5a6a78"/><rect x="1673" y="619" width="1" height="1" fill="#5a6a78"/><rect x="1674" y="620.5" width="1" height="1" fill="#5a6a78"/><rect x="1675" y="619" width="1" height="1" fill="#5a6a78"/><rect x="1676" y="620.5" width="1" height="1" fill="#5a6a78"/><rect x="1677" y="619" width="1" height="1" fill="#5a6a78"/><rect x="1678" y="620.5" width="1" height="1" fill="#5a6a78"/><rect x="1679" y="619" width="1" height="1" fill="#5a6a78"/><rect x="1680" y="620.5" width="1" height="1" fill="#5a6a78"/><rect x="1681" y="619" width="1" height="1" fill="#5a6a78"/><rect x="1682" y="620.5" width="1" height="1" fill="#5a6a78"/><rect x="1683" y="619" width="1" height="1" fill="#5a6a78"/><rect x="1684" y="620.5" width="1" height="1" fill="#5a6a78"/><rect x="1685" y="619" width="1" height="1" fill="#5a6a78"/><rect x="1686" y="620.5" width="1" height="1" fill="#5a6a78"/><rect x="1687" y="619" width="1" height="1" fill="#5a6a78"/><rect x="1688" y="620.5" width="1" height="1" fill="#5a6a78"/><rect x="1689" y="619" width="1" height="1" fill="#5a6a78"/><rect x="1690" y="620.5" width="1" height="1" fill="#5a6a78"/><rect x="1691" y="619" width="1" height="1" fill="#5a6a78"/><rect x="1692" y="620.5" width="1" height="1" fill="#5a6a78"/><rect x="1693" y="619" width="1" height="1" fill="#5a6a78"/><rect x="1694" y="620.5" width="1" height="1" fill="#5a6a78"/><rect x="1695" y="619" width="1" height="1" fill="#5a6a78"/><rect x="1696" y="620.5" width="1" height="1" fill="#5a6a78"/><rect x="1697" y="619" width="1" height="1" fill="#5a6a78"/><rect x="1698" y="620.5" width="1" height="1" fill="#5a6a78"/><rect x="1699" y="619" width="1" height="1" fill="#5a6a78"/><rect x="1700" y="620.5" width="1" height="1" fill="#5a6a78"/><rect x="1701" y="619" width="1" height="1" fill="#5a6a78"/><rect x="1702" y="620.5" width="1" height="1" fill="#5a6a78"/><rect x="1703" y="619" width="1" height="1" fill="#5a6a78"/><rect x="1704" y="620.5" width="1" height="1" fill="#5a6a78"/><rect x="1705" y="619" width="1" height="1" fill="#5a6a78"/><rect x="1706" y="620.5" width="1" height="1" fill="#5a6a78"/><rect x="1707" y="619" width="1" height="1" fill="#5a6a78"/><rect x="1708" y="620.5" width="1" height="1" fill="#5a6a78"/><rect x="1628" y="787" width="1" height="1" fill="#5a6a78"/><rect x="1629" y="788.5" width="1" height="1" fill="#5a6a78"/><rect x="1630" y="787" width="1" height="1" fill="#5a6a78"/><rect x="1631" y="788.5" width="1" height="1" fill="#5a6a78"/><rect x="1632" y="787" width="1" height="1" fill="#5a6a78"/><rect x="1633" y="788.5" width="1" height="1" fill="#5a6a78"/><rect x="1634" y="787" width="1" height="1" fill="#5a6a78"/><rect x="1635" y="788.5" width="1" height="1" fill="#5a6a78"/><rect x="1636" y="787" width="1" height="1" fill="#5a6a78"/><rect x="1637" y="788.5" width="1" height="1" fill="#5a6a78"/><rect x="1638" y="787" width="1" height="1" fill="#5a6a78"/><rect x="1639" y="788.5" width="1" height="1" fill="#5a6a78"/><rect x="1640" y="787" width="1" height="1" fill="#5a6a78"/><rect x="1641" y="788.5" width="1" height="1" fill="#5a6a78"/><rect x="1642" y="787" width="1" height="1" fill="#5a6a78"/><rect x="1643" y="788.5" width="1" height="1" fill="#5a6a78"/><rect x="1644" y="787" width="1" height="1" fill="#5a6a78"/><rect x="1645" y="788.5" width="1" height="1" fill="#5a6a78"/><rect x="1646" y="787" width="1" height="1" fill="#5a6a78"/><rect x="1647" y="788.5" width="1" height="1" fill="#5a6a78"/><rect x="1648" y="787" width="1" height="1" fill="#5a6a78"/><rect x="1649" y="788.5" width="1" height="1" fill="#5a6a78"/><rect x="1650" y="787" width="1" height="1" fill="#5a6a78"/><rect x="1651" y="788.5" width="1" height="1" fill="#5a6a78"/><rect x="1652" y="787" width="1" height="1" fill="#5a6a78"/><rect x="1653" y="788.5" width="1" height="1" fill="#5a6a78"/><rect x="1654" y="787" width="1" height="1" fill="#5a6a78"/><rect x="1655" y="788.5" width="1" height="1" fill="#5a6a78"/><rect x="1656" y="787" width="1" height="1" fill="#5a6a78"/><rect x="1657" y="788.5" width="1" height="1" fill="#5a6a78"/><rect x="1658" y="787" width="1" height="1" fill="#5a6a78"/><rect x="1659" y="788.5" width="1" height="1" fill="#5a6a78"/><rect x="1660" y="787" width="1" height="1" fill="#5a6a78"/><rect x="1661" y="788.5" width="1" height="1" fill="#5a6a78"/><rect x="1662" y="787" width="1" height="1" fill="#5a6a78"/><rect x="1663" y="788.5" width="1" height="1" fill="#5a6a78"/><rect x="1664" y="787" width="1" height="1" fill="#5a6a78"/><rect x="1665" y="788.5" width="1" height="1" fill="#5a6a78"/><rect x="1666" y="787" width="1" height="1" fill="#5a6a78"/><rect x="1667" y="788.5" width="1" height="1" fill="#5a6a78"/><rect x="1633" y="198" width="18" height="2" fill="#111"/><rect x="1634" y="200" width="16" height="6" fill="#1a7a2a"/><path d="M1635,202h14" stroke="#6ac86a" stroke-width="0.8"/><rect x="1640" y="206" width="11" height="9" fill="#555"/><rect x="1645" y="207" width="3" height="7" fill="#7ad0e0"/><path d="M1640,209h5M1640,212h5" stroke="#a02a4a" stroke-width="0.8"/><rect x="1639" y="215" width="12" height="2" fill="#111"/><path d="M1631.5,207.5 H1636 L1638.5,210 V216.5 H1631.5 Z" fill="#fff" stroke="#333" stroke-width="0.9"/><path d="M1636,207.5 V210 H1638.5" fill="none" stroke="#333" stroke-width="0.7"/><path d="M1659,204 L1663.5,208 L1659,212 Z" fill="#2a3a48"/><rect x="1633" y="226" width="18" height="2.5" fill="#8a8e92"/><rect x="1634" y="228.5" width="16" height="15" fill="#9a9ea2"/><path d="M1636,231h12M1636,234h12M1637,237h10M1637,240h10" stroke="#e0e4e8" stroke-width="1"/><rect x="1633" y="243.5" width="18" height="2.5" fill="#8a8e92"/><path d="M1659,232 L1663.5,236 L1659,240 Z" fill="#b4c2cc"/><rect x="1641.5" y="254.5" width="8" height="3" rx="1" fill="#c8c8b8" stroke="#111"/><rect x="1643" y="257.5" width="5" height="15" rx="1" fill="url(#rbrass)" stroke="#111" stroke-width="0.9"/><path d="M1631.5,265.5 H1636 L1638.5,268 V274.5 H1631.5 Z" fill="#fff" stroke="#333" stroke-width="0.9"/><path d="M1636,265.5 V268 H1638.5" fill="none" stroke="#333" stroke-width="0.7"/><path d="M1659,260 L1663.5,264 L1659,268 Z" fill="#2a3a48"/><path d="M1640,284 L1651,294 L1648,297 L1637,287 Z" fill="url(#rbrass)" stroke="#111" stroke-width="1"/><path d="M1639,289 l4,-4 M1644,293 l4,-4" stroke="#111" stroke-width="1.2"/><path d="M1631.5,293.5 H1636 L1638.5,296 V302.5 H1631.5 Z" fill="#fff" stroke="#333" stroke-width="0.9"/><path d="M1636,293.5 V296 H1638.5" fill="none" stroke="#333" stroke-width="0.7"/><path d="M1659,288 L1663.5,292 L1659,296 Z" fill="#2a3a48"/><rect x="1638" y="310" width="13" height="4" fill="#1a6a5a"/><rect x="1638" y="314" width="13" height="3" fill="#1a7a2a"/><rect x="1640" y="317" width="8" height="2" fill="#e8e8b0"/><rect x="1640" y="319" width="3" height="5" fill="#111"/><rect x="1646" y="319" width="3" height="5" fill="#111"/><rect x="1640" y="323" width="3" height="3" fill="#8a8a30"/><rect x="1646" y="323" width="3" height="3" fill="#8a8a30"/><path d="M1631.5,319.5 H1636 L1638.5,322 V328.5 H1631.5 Z" fill="#fff" stroke="#333" stroke-width="0.9"/><path d="M1636,319.5 V322 H1638.5" fill="none" stroke="#333" stroke-width="0.7"/><path d="M1659,316 L1663.5,320 L1659,324 Z" fill="#2a3a48"/><path d="M1638,350 l3,-3 l-2,-2 l3,-3 l-2,-2 l3,-3" fill="none" stroke="#111" stroke-width="1.6"/><path d="M1643,340 l6,-2 l2,5 -4,3z" fill="#c8c8c0" stroke="#111" stroke-width="0.9"/><path d="M1631.5,349.5 H1636 L1638.5,352 V358.5 H1631.5 Z" fill="#fff" stroke="#333" stroke-width="0.9"/><path d="M1636,349.5 V352 H1638.5" fill="none" stroke="#333" stroke-width="0.7"/><path d="M1659,344 L1663.5,348 L1659,352 Z" fill="#2a3a48"/><path d="M1640,376 L1648,368 L1651,371 L1643,379 Z" fill="url(#rbrass)" stroke="#111" stroke-width="1"/><path d="M1631.5,377.5 H1636 L1638.5,380 V386.5 H1631.5 Z" fill="#fff" stroke="#333" stroke-width="0.9"/><path d="M1636,377.5 V380 H1638.5" fill="none" stroke="#333" stroke-width="0.7"/><path d="M1659,372 L1663.5,376 L1659,380 Z" fill="#2a3a48"/><rect x="1643.5" y="394.5" width="4" height="15" fill="url(#rbrass)" stroke="#111" stroke-width="0.9"/><rect x="1642" y="409" width="9" height="2.5" fill="#e8e8b0" stroke="#111" stroke-width="0.9"/><path d="M1631.5,405.5 H1636 L1638.5,408 V414.5 H1631.5 Z" fill="#fff" stroke="#333" stroke-width="0.9"/><path d="M1636,405.5 V408 H1638.5" fill="none" stroke="#333" stroke-width="0.7"/><path d="M1659,400 L1663.5,404 L1659,408 Z" fill="#2a3a48"/><rect x="1632" y="422" width="10" height="5" fill="#1a7a7a"/><rect x="1632" y="427" width="4" height="3" fill="#7ad8e8"/><rect x="1640" y="425" width="6" height="7" fill="url(#rbrass)" stroke="#111" stroke-width="0.7"/><rect x="1646" y="426" width="5" height="5" fill="#e8e8b0" stroke="#111" stroke-width="0.7"/><path d="M1642,432v4" stroke="#111" stroke-width="1.2"/><path d="M1631.5,434.5 H1636 L1638.5,437 V443.5 H1631.5 Z" fill="#fff" stroke="#333" stroke-width="0.9"/><path d="M1636,434.5 V437 H1638.5" fill="none" stroke="#333" stroke-width="0.7"/><path d="M1659,428 L1663.5,432 L1659,436 Z" fill="#2a3a48"/><rect x="1640" y="450" width="11" height="2" fill="#111"/><rect x="1641.5" y="452" width="8" height="15" fill="url(#rbrass)" stroke="#111" stroke-width="0.9"/><rect x="1640" y="467" width="11" height="2" fill="#111"/><path d="M1640,456v8" stroke="#111" stroke-width="1"/><path d="M1631.5,461.5 H1636 L1638.5,464 V470.5 H1631.5 Z" fill="#fff" stroke="#333" stroke-width="0.9"/><path d="M1636,461.5 V464 H1638.5" fill="none" stroke="#333" stroke-width="0.7"/><path d="M1659,456 L1663.5,460 L1659,464 Z" fill="#2a3a48"/><path d="M1635,478h16" stroke="#111" stroke-width="1.2"/><path d="M1638,481 L1648,494" stroke="#c8c880" stroke-width="3.5"/><path d="M1638,481 L1648,494" stroke="#111" stroke-width="0.6" fill="none"/><rect x="1640" y="490" width="11" height="7" fill="#d0d0d0" stroke="#111"/><rect x="1649" y="484" width="2" height="5" fill="#c02a8a"/><path d="M1631.5,489.5 H1636 L1638.5,492 V498.5 H1631.5 Z" fill="#fff" stroke="#333" stroke-width="0.9"/><path d="M1636,489.5 V492 H1638.5" fill="none" stroke="#333" stroke-width="0.7"/><path d="M1659,484 L1663.5,488 L1659,492 Z" fill="#2a3a48"/><rect x="1636" y="507" width="8" height="4" fill="#1a7a2a"/><rect x="1637" y="513" width="7" height="3" fill="#1a6a3a"/><path d="M1643,507h5v12h-4" fill="#e8e8b0" stroke="#111" stroke-width="0.9"/><rect x="1648" y="512" width="3" height="3" fill="#111"/><rect x="1639" y="518" width="5" height="6" fill="#8a8a30"/><path d="M1631.5,517.5 H1636 L1638.5,520 V526.5 H1631.5 Z" fill="#fff" stroke="#333" stroke-width="0.9"/><path d="M1636,517.5 V520 H1638.5" fill="none" stroke="#333" stroke-width="0.7"/><path d="M1659,512 L1663.5,516 L1659,520 Z" fill="#2a3a48"/><rect x="1637" y="534.5" width="14" height="6" fill="#1a6a6a"/><path d="M1640,536.5h8" stroke="#fff" stroke-width="1"/><path d="M1641,540.5 L1647,548.5" stroke="#e8e8a0" stroke-width="2.5"/><rect x="1638" y="548.5" width="13" height="3" fill="#8a9a3a"/><rect x="1640" y="545.5" width="10" height="3" fill="#111"/><path d="M1631.5,544.0 H1636 L1638.5,546.5 V553.0 H1631.5 Z" fill="#fff" stroke="#333" stroke-width="0.9"/><path d="M1636,544.0 V546.5 H1638.5" fill="none" stroke="#333" stroke-width="0.7"/><path d="M1659,539.5 L1663.5,543.5 L1659,547.5 Z" fill="#2a3a48"/><rect x="1637.5" y="562.5" width="14" height="19" fill="#9ea2a6"/><path d="M1639,565h11M1639,571h11" stroke="#e4e8ec" stroke-width="1.2"/><path d="M1640,568l2,2 2,-2M1645,568l2,2 2,-2" stroke="#e4e8ec" stroke-width="0.8" fill="none"/><path d="M1640,575h9M1640,578h9" stroke="#e4e8ec" stroke-width="1.1"/><path d="M1631.5,573.5 H1636 L1638.5,576 V582.5 H1631.5 Z" fill="#fff" stroke="#a8b0b6" stroke-width="0.9"/><path d="M1636,573.5 V576 H1638.5" fill="none" stroke="#a8b0b6" stroke-width="0.7"/><path d="M1659,568 L1663.5,572 L1659,576 Z" fill="#b4c2cc"/><path d="M1637,601 V595 a2,2 0 0 1 4,0 V604" fill="none" stroke="#9ea2a6" stroke-width="1.8"/><rect x="1643" y="592" width="6" height="10" rx="3" fill="#c4c8cc" stroke="#8a8e92"/><path d="M1640,605 q5,4 11,0" fill="none" stroke="#9ea2a6" stroke-width="1.5"/><path d="M1631.5,601.5 H1636 L1638.5,604 V610.5 H1631.5 Z" fill="#fff" stroke="#a8b0b6" stroke-width="0.9"/><path d="M1636,601.5 V604 H1638.5" fill="none" stroke="#a8b0b6" stroke-width="0.7"/><path d="M1659,596 L1663.5,600 L1659,604 Z" fill="#b4c2cc"/><rect x="1635.5" y="618.5" width="12" height="12" fill="#5acad0" stroke="#111"/><path d="M1647.5,618.5 V631" stroke="#111"/><rect x="1640" y="628" width="11" height="7" fill="#fff" stroke="#111" stroke-width="0.9"/><text x="1641" y="634.5" font-size="7" font-weight="bold" font-family="Liberation Sans" fill="#111">DB</text><path d="M1631.5,629.5 H1636 L1638.5,632 V638.5 H1631.5 Z" fill="#fff" stroke="#333" stroke-width="0.9"/><path d="M1636,629.5 V632 H1638.5" fill="none" stroke="#333" stroke-width="0.7"/><path d="M1659,624 L1663.5,628 L1659,632 Z" fill="#2a3a48"/><rect x="1640" y="646" width="15" height="18" fill="#f4f6f8" stroke="#8a8e92" stroke-width="0.8"/><rect x="1640" y="646" width="15" height="3" fill="#9ea2a6"/><path d="M1640,652h15M1640,655h15M1640,658h15M1640,661h15M1644,649v15M1648,649v15M1652,649v15" stroke="#a0a4a8" stroke-width="0.6"/><path d="M1638,663 L1654,648" stroke="#8a8e92" stroke-width="2"/><rect x="1637" y="675" width="14" height="3" fill="#8a8e92"/><rect x="1638" y="679" width="12" height="12" fill="#8e9296"/><path d="M1640,682h8M1640,685h8M1640,688h8" stroke="#e0e4e8" stroke-width="1"/><rect x="1637" y="691" width="14" height="2.5" fill="#8a8e92"/><path d="M1655,676v16" stroke="#8a8e92" stroke-width="1.5" stroke-dasharray="2,1"/><path d="M1653,678 l2,-3 2,3z M1653,690 l2,3 2,-3z" fill="#8a8e92"/><path d="M1636,705.5 q7,-7 14,0 q-7,6 -14,0z" fill="#e4e8ec" stroke="#9ea2a6" stroke-width="0.9"/><circle cx="1643" cy="705.5" r="2.5" fill="#8a8e92"/><rect x="1632" y="711.5" width="10" height="2" fill="#8a8e92"/><rect x="1633" y="713.5" width="8" height="8" fill="#8e9296"/><path d="M1635,716.5h4" stroke="#e0e4e8"/><rect x="1632" y="720.5" width="10" height="2" fill="#8a8e92"/><path d="M1659,707.5 L1663.5,711.5 L1659,715.5 Z" fill="#b4c2cc"/><path d="M1635.5,734.5 L1638,731.5 H1651 V742 L1648,745 H1635.5 Z" fill="#fff" stroke="#222" stroke-width="0.9"/><rect x="1638" y="736" width="8" height="5" fill="#6ab8c8" stroke="#1a5a6a" stroke-width="0.7"/><rect x="1632.5" y="744.5" width="15" height="5" fill="#fff" stroke="#222" stroke-width="0.9"/><path d="M1634,746.5v3M1636,747.5v2M1638,746.5v3M1640,747.5v2M1642,746.5v3M1644,747.5v2M1646,746.5v3" stroke="#222" stroke-width="0.6"/><path d="M1659,736 L1663.5,740 L1659,744 Z" fill="#2a3a48"/><circle cx="1646.5" cy="772" r="8.5" fill="#6ad0e8" stroke="#1a7a8a" stroke-width="0.8"/><path d="M1640,767 q4,2 5,6 q3,0 5,4 l-3,3 q-2,-3 -5,-3z" fill="#1a7a1a"/><text x="1637" y="767" font-size="9" font-weight="bold" font-family="Liberation Sans" fill="#111" letter-spacing="-0.5">EMX</text><rect x="1632" y="801" width="1" height="1" fill="#223"/><rect x="1632" y="817" width="1" height="1" fill="#223"/><rect x="1635" y="801" width="1" height="1" fill="#223"/><rect x="1635" y="817" width="1" height="1" fill="#223"/><rect x="1638" y="801" width="1" height="1" fill="#223"/><rect x="1638" y="817" width="1" height="1" fill="#223"/><rect x="1641" y="801" width="1" height="1" fill="#223"/><rect x="1641" y="817" width="1" height="1" fill="#223"/><rect x="1644" y="801" width="1" height="1" fill="#223"/><rect x="1644" y="817" width="1" height="1" fill="#223"/><rect x="1647" y="801" width="1" height="1" fill="#223"/><rect x="1647" y="817" width="1" height="1" fill="#223"/><rect x="1650" y="801" width="1" height="1" fill="#223"/><rect x="1650" y="817" width="1" height="1" fill="#223"/><path d="M1632,812 q5,-9 9,-2 q4,6 9,-1" fill="none" stroke="#1a6aa8" stroke-width="1.6"/><path d="M1632,806h1M1635,806h1M1644,806h1M1647,806h1M1650,806h1M1632,811h1M1644,812h1M1647,812h1" stroke="#223" stroke-width="1"/><path d="M1632,843 L1637,833 H1650 L1645,843 Z" fill="none" stroke="#8a5a30" stroke-width="1.5"/><path d="M1636,875 L1645,857" stroke="#6a4a2a" stroke-width="2" stroke-dasharray="3,2.5"/><path d="M1631.5,900.6 q3,-9 7,-6 q4,3 6,0 q2,-3 6,-5" fill="none" stroke="#7a5030" stroke-width="1.4"/><g stroke="#a85a2a" stroke-width="1.2"><path d="M1638,914l4,4M1642,914l-4,4M1633,920l4,4M1637,920l-4,4M1643,918l4,4M1647,918l-4,4"/></g><path d="M1659,918 L1663.5,922 L1659,926 Z" fill="#2a3a48"/><g stroke="#8a5028" stroke-width="1.2"><path d="M1631,950h12M1635,942l6,14M1643,942l-8,14"/></g><path d="M1646,949l3,3m0,-3l-3,3" stroke="#556" stroke-width="0.9"/><path d="M1632,941l1.5,2l1.5,-2M1633.5,943v2M1632,956h3l-3,3h3" stroke="#556" stroke-width="0.8" fill="none"/><path d="M1635,974l4,4m0,-4l-4,4" stroke="#8a5028" stroke-width="1.2"/><path d="M1640,969l1,2M1643,974l1,2" stroke="#6a4a2a" stroke-width="1.4"/><rect x="1632.5" y="980.5" width="16" height="6" fill="url(#rhatch)" stroke="#8a8a50" stroke-width="0.8"/><path d="M1638,1008 l4,-4 M1643,1003 l4,-5" stroke="#c89a5a" stroke-width="2.4"/><path d="M1638,1008 l4,-4 M1643,1003 l4,-5" stroke="#fff8e8" stroke-width="0.8"/><rect x="1672.5" y="199.5" width="12" height="9" fill="#fff8b0" stroke="#5a5a30"/><path d="M1684,204.5h6l-7,10 M1683,214.5v-3M1683,214.5h3" stroke="#111" stroke-width="0.9" fill="none"/><rect x="1672.5" y="226.5" width="13" height="12" fill="#fff8b0" stroke="#5a5a30"/><circle cx="1681" cy="234" r="4.5" fill="none" stroke="#333" stroke-width="0.9"/><path d="M1677,236h8" stroke="#333" stroke-width="0.8"/><text x="1678.5" y="237" font-size="6" fill="#333">A</text><path d="M1685,232.5h6l-7,10 M1684,242.5v-3M1684,242.5h3" stroke="#111" stroke-width="0.9" fill="none"/><rect x="1672.5" y="254.5" width="10" height="5" fill="none" stroke="#a0a8ae"/><rect x="1676.5" y="262.5" width="10" height="5" fill="none" stroke="#a0a8ae"/><path d="M1683,257h4l-3,5M1687,265h4l-4,7" stroke="#a0a8ae" stroke-width="0.9" fill="none"/><path d="M1673,299 H1680 V310 H1685 V299 H1692" fill="none" stroke="#b4bcc2" stroke-width="1.2"/><path d="M1673,303l5,5M1686,303l5,5" stroke="#c4ccd2" stroke-width="1"/><path d="M1673.5,328.2 L1676,325.2 H1690 V337.7 L1687,340.7 H1673.5 Z" fill="#f4f6f8" stroke="#a8b0b6" stroke-width="0.9"/><rect x="1677" y="329.7" width="8" height="8" fill="#d8dde0" stroke="#a8b0b6" stroke-width="0.7"/><path d="M1673,368 V357 L1677,353 V364 L1673,368" fill="none" stroke="#b8c0c6" stroke-width="0.9"/><rect x="1677" y="358" width="8" height="7" fill="#d4dadf"/><path d="M1685,365 L1692,358 V353" fill="none" stroke="#b8c0c6" stroke-width="0.9"/><path d="M1673,368h12" stroke="#b8c0c6" stroke-dasharray="1,1"/><path d="M1700,358 L1704.5,362 L1700,366 Z" fill="#b4c2cc"/><path d="M1673,396 V386 L1679,381 H1685 L1691,392 L1685,396 Z" fill="url(#rcyan)" stroke="#2a9aa8" stroke-width="0.9"/><path d="M1673,386h6 L1685,396" fill="none" stroke="#2a9aa8" stroke-width="0.9"/><rect x="1672" y="416" width="11" height="10" fill="#e8e8e0"/><path d="M1675,411 q10,-2 16,8 l-2,7 q-3,-7 -12,-10z" fill="url(#rcyan)" stroke="#2a8a9a" stroke-width="0.8"/><path d="M1689,426 l2,-7" stroke="#9a9a90" stroke-width="2"/><rect x="1672" y="440.5" width="10" height="12" fill="#ecece4"/><path d="M1679,437.5 H1685 L1691,444.5 L1686,449.5 Z" fill="#a8ecf4" stroke="#2a8a9a" stroke-width="0.8"/><path d="M1686,449.5 L1691,444.5 V452.5 L1686,456.5Z" fill="#b0b0a8"/><rect x="1672.5" y="485.0" width="9" height="9" fill="#a0eaf4" stroke="#1a6a7a"/><path d="M1672.5,485.0 L1681,477.5 H1690 V486.5 L1681.5,494.0" fill="none" stroke="#1a4a5a" stroke-width="0.8" stroke-dasharray="2,1"/><path d="M1681,477.5h9v9" fill="none" stroke="#1a4a5a" stroke-width="1"/><circle cx="1677" cy="516.8" r="3.5" fill="none" stroke="#2a8a9a" stroke-width="1"/><circle cx="1686" cy="516.8" r="3.5" fill="#a8ecf4" stroke="#2a8a9a" stroke-width="1"/><path d="M1681.5,505.79999999999995v20" stroke="#333" stroke-width="1" stroke-dasharray="1.5,1.5"/><path d="M1678,512.8 q4,-5 8,0" fill="none" stroke="#2a8a9a" stroke-width="0.8" stroke-dasharray="1,1"/><path d="M1672,538 L1678,533 L1684,540 L1692,541 L1691,552 L1683,550 Z" fill="url(#rcyan)" stroke="#2a5a6a" stroke-width="0.8"/><path d="M1678,533 L1679,543 L1684,551" fill="none" stroke="#9aa0a4" stroke-width="2"/><path d="M1673,576 q2,-9 9,-11 l9,-2 q-2,8 -7,14 l-1,4 q-4,-5 -10,-5z" fill="url(#rcyan)" stroke="#2a6a7a" stroke-width="0.8"/><path d="M1679,566 l5,13 M1677,571 l12,-4" stroke="#2a6a7a" stroke-width="0.7" fill="none"/><path d="M1675,607.4 V596.4 q3,-4 7,-4 q5,0 8,3 V606.4 q-5,-3 -8,-2 q-4,1 -7,4z" fill="#d4f2f6" stroke="#1a4a5a" stroke-width="0.9"/><path d="M1681.5,632v18" stroke="#b8c0c6" stroke-width="1.1"/><path d="M1679,648 H1673 V639 q1,-5 6,-6z M1684,648 H1690 V639 q-1,-5 -6,-6z" fill="#eef2f4" stroke="#b8c0c6" stroke-width="0.9"/><rect x="1680.5" y="659.5" width="10" height="10" fill="#f0f4f6" stroke="#b8c0c6"/><circle cx="1679" cy="671" r="5.5" fill="none" stroke="#b8c0c6" stroke-width="1"/><path d="M1680.5,685.5 H1690.5 V696 H1685 q0,-5 -4.5,-5z" fill="#f0f4f6" stroke="#b8c0c6"/><circle cx="1679" cy="697" r="5.5" fill="#e8ecf0" stroke="#d0d6da" stroke-width="1"/><path d="M1673.5,718.5 L1676,716 H1691 V730 L1688.5,732.5 H1673.5 Z" fill="#f4f6f8" stroke="#a8b0b6" stroke-width="0.9"/><path d="M1688.5,718.5 L1691,716 V730 L1688.5,732.5Z" fill="#c8ced2"/><g fill="#8a9298"><rect x="1677" y="721" width="1.2" height="1.2"/><rect x="1681" y="721" width="1.2" height="1.2"/><rect x="1685" y="721" width="1.2" height="1.2"/><rect x="1677" y="725" width="1.2" height="1.2"/><rect x="1681" y="725" width="1.2" height="1.2"/><rect x="1685" y="725" width="1.2" height="1.2"/><rect x="1677" y="729" width="1.2" height="1.2"/><rect x="1681" y="729" width="1.2" height="1.2"/><rect x="1685" y="729" width="1.2" height="1.2"/></g></svg>
<!--TEXT-->
<div class="a menu" style="left:15px">文件(F)</div>
<div class="a menu" style="left:70px">编辑(E)</div>
<div class="a menu" style="left:125px">视图(V)</div>
<div class="a menu" style="left:182px">插入(I)</div>
<div class="a menu" style="left:234px">分析(A)</div>
<div class="a menu" style="left:291px">信息(N)</div>
<div class="a menu" style="left:350px">应用程序(P)</div>
<div class="a menu" style="left:432px">工具(T)</div>
<div class="a menu" style="left:487px">窗口(W)</div>
<div class="a menu" style="left:548px">帮助(H)</div>
<div class="a menu" style="left:606px">PDX 7.0</div>
<div class="a menu" style="left:669px">EMX 7.0</div>
<div class="a dot" style="top:106px"></div><div class="a msgl" style="top:101px">检查过特征类型将显示在模型树中。</div>
<div class="a dot" style="top:123px"></div><div class="a msgl" style="top:118px">1 再生成功完成。</div>
<div class="a dot" style="top:140px"></div><div class="a msgl" style="top:135px">基本窗口不能关闭。</div>
<div class="a dot" style="top:157px"></div><div class="a msgl" style="top:152px">将不显示轴。</div>
<div class="a ti" style="left:39px;top:243px">PRT0001.PRT</div>
<div class="a ti" style="left:59px;top:265px">RIGHT</div>
<div class="a ti" style="left:59px;top:287px">TOP</div>
<div class="a ti" style="left:59px;top:309px">FRONT</div>
<div class="a ti" style="left:59px;top:331px">PRT_CSYS_DEF</div>
<div class="a ti tg" style="left:59px;top:353px">草绘 1</div>
<div class="a ti" style="left:59px;top:375px">A_1</div>
<div class="a ti" style="left:59px;top:397px">A_2</div>
<div class="a ti" style="left:59px;top:419px">旋转 1</div>
<div class="a ti" style="left:59px;top:441px">复制 1</div>
<div class="a ti" style="left:59px;top:463px">BALL</div>
<div class="a ti tg" style="left:59px;top:485px">草绘 2</div>
<div class="a ti" style="left:59px;top:507px">阵列 1 / 投影 1</div>
<div class="a ti" style="left:59px;top:529px">阵列 2 / 复制 2</div>
<div class="a ti" style="left:59px;top:551px">修剪 1</div>
<div class="a ti" style="left:59px;top:573px">修剪 2</div>
<div class="a ti" style="left:59px;top:595px">A5</div>
<div class="a ti" style="left:59px;top:617px">A6</div>
<div class="a ti" style="left:59px;top:639px">ANALYSIS1</div>
<div class="a ti" style="left:59px;top:661px">偏移 1</div>
<div class="a ti" style="left:59px;top:683px">合并 1</div>
<div class="a ti" style="left:59px;top:705px">合并 2</div>
<div class="a ti" style="left:59px;top:727px">倒圆角 1</div>
<div class="a ti" style="left:59px;top:749px">倒圆角 2</div>
<div class="a ti" style="left:59px;top:771px">偏移 2</div>
<div class="a ti" style="left:59px;top:793px">合并 3</div>
<div class="a ti" style="left:59px;top:815px">合并 4</div>
<div class="a ti" style="left:59px;top:837px">倒圆角 3</div>
<div class="a ti" style="left:59px;top:859px">倒圆角 4</div>
<div class="a ti" style="left:59px;top:881px">阵列 3 / 已移动副本 1</div>
<div class="a ti" style="left:59px;top:903px">阵列 4 / 已移动副本 2</div>
<div class="a ti" style="left:59px;top:925px">阵列 5 / 已移动副本 3</div>
<div class="a ti" style="left:59px;top:947px">已移动副本 4</div>
<div class="a ti" style="left:59px;top:969px">在此插入</div>
<div class="a" style="left:34px;top:214px;font-size:13px;font-weight:bold;color:#333">模型树</div>
<!--/TEXT-->
<!--BALL-->
<svg class="a" style="left:740px;top:370px" width="500" height="500" viewBox="0 0 500 500">
<defs>
<clipPath id="bc"><circle cx="248.5" cy="251" r="236"/></clipPath>
<radialGradient id="bw" cx="258" cy="170" r="320" gradientUnits="userSpaceOnUse">
<stop offset="0" stop-color="#ffffff"/><stop offset="0.35" stop-color="#fbfbfb"/><stop offset="0.62" stop-color="#e2e2e2"/><stop offset="0.8" stop-color="#bdbdbd"/><stop offset="1" stop-color="#8c8c8c"/></radialGradient>
<radialGradient id="p1g" cx="285" cy="200" r="150" gradientUnits="userSpaceOnUse">
<stop offset="0" stop-color="#c6e0e2"/><stop offset="0.45" stop-color="#9eb2b4"/><stop offset="1" stop-color="#5c6064"/></radialGradient>
<radialGradient id="dg" cx="250" cy="200" r="300" gradientUnits="userSpaceOnUse">
<stop offset="0" stop-color="#575757"/><stop offset="0.6" stop-color="#404040"/><stop offset="1" stop-color="#262626"/></radialGradient>
<linearGradient id="dg3" x1="0" y1="0" x2="1" y2="1"><stop offset="0" stop-color="#2a2a2a"/><stop offset="1" stop-color="#3a3a3a"/></linearGradient>
<radialGradient id="shade" cx="270" cy="190" r="300" gradientUnits="userSpaceOnUse">
<stop offset="0.55" stop-color="#000" stop-opacity="0"/><stop offset="0.85" stop-color="#000" stop-opacity="0.08"/><stop offset="1" stop-color="#000" stop-opacity="0.2"/></radialGradient>
</defs>
<g clip-path="url(#bc)">
<rect x="0" y="0" width="500" height="500" fill="url(#bw)"/>
<g fill="none"><path d="M211.4,81.6L186.7,37.2M299.3,102.6L365.7,81.6M301,186.5L369.7,248.8M213,213.3L191.4,307.9M157.8,149.2L76.6,176.8M457.5,306.2L490,300M403.6,373.6L372,442.5M350.5,340.6L258.2,368.2M115.6,335.7L57,269M133.6,415.2L83,420.6M223.9,435L274.4,472.6M365.7,81.6L344.8,38.5" stroke="#ffffff" stroke-width="1.6" transform="translate(0.8,0.8)"/><path d="M211.4,81.6L186.7,37.2M299.3,102.6L365.7,81.6M301,186.5L369.7,248.8M213,213.3L191.4,307.9M157.8,149.2L76.6,176.8M457.5,306.2L490,300M403.6,373.6L372,442.5M350.5,340.6L258.2,368.2M115.6,335.7L57,269M133.6,415.2L83,420.6M223.9,435L274.4,472.6M365.7,81.6L344.8,38.5" stroke="#9a9a9a" stroke-width="0.9"/></g>
<polygon points="211.4,81.6 299.3,102.6 301,186.5 213,213.3 157.8,149.2" fill="url(#p1g)" stroke="#3a3e40" stroke-width="1"/>
<polygon points="369.7,248.8 436.6,228.7 457.5,306.2 403.6,373.6 350.5,340.6" fill="url(#dg)"/>
<polygon points="115.6,335.7 191.4,307.9 258.2,368.2 223.9,435 133.6,415.2" fill="url(#dg3)"/>
<polygon points="52.4,137 76.6,176.8 57,269 18,282.6 -20,290 -20,130" fill="url(#dg)"/>
<polygon points="344.8,38.5 365.7,81.6 435.7,142.7 454.3,139.4 520,130 360,-10" fill="url(#dg)"/>
<polygon points="109.3,60 146.6,44.2 186.7,37.2 214.7,21.3 242.7,15.3 250,-20 60,20" fill="url(#dg)"/>
<polygon points="274.4,472.6 372,442.5 380.6,444 400,520 270,520" fill="url(#dg)"/>
<polygon points="80,417 100,428 70,440" fill="url(#dg)"/>
<rect x="0" y="0" width="500" height="500" fill="url(#shade)"/>
</g>
<g stroke-width="1.2" fill="none">
<path d="M248.5,256 L248.5,279" stroke="#3aa0c8"/>
<path d="M248.5,256 L253.8,243" stroke="#1a8a3a"/>
<path d="M248.5,256 L273.7,258.3" stroke="#802030"/>
</g>
<circle cx="253.8" cy="243" r="3" fill="#1a9a3a"/>
<circle cx="273.7" cy="258.3" r="2.4" fill="#a02030"/>
<circle cx="248.6" cy="279" r="2.8" fill="#4aa0e0"/>
</svg>
<!--/BALL-->
<div class="a" style="left:1607px;top:1px;width:103px;height:20px;border:1px solid #3a3a3a;border-top:none;border-radius:0 0 5px 5px;background:#3a3a3a;overflow:hidden">
<div class="a" style="left:0;top:0;width:27px;height:19px;border:1px solid rgba(255,255,255,.6);border-radius:0 0 0 4px;background:linear-gradient(#bcbcbc 0,#9a9a9a 45%,#5a5e66 50%,#6a6e76 80%,#8a8e94 100%)"></div>
<div class="a" style="left:9px;top:9px;width:10px;height:3px;background:#fff;box-shadow:0 0 1px #222"></div>
<div class="a" style="left:28px;top:0;width:26px;height:19px;border:1px solid rgba(255,255,255,.6);background:linear-gradient(#bcbcbc 0,#9a9a9a 45%,#5a5e66 50%,#6a6e76 80%,#8a8e94 100%)"></div>
<div class="a" style="left:36px;top:4px;width:10px;height:9px;border:2px solid #fff;border-top-width:3px;background:#3a3e44;box-shadow:0 0 1px #222"></div>
<div class="a" style="left:55px;top:0;width:47px;height:19px;border:1px solid rgba(255,225,215,.75);border-radius:0 0 4px 0;background:linear-gradient(#e6a898 0,#d67c66 45%,#b8321c 50%,#c84a2c 80%,#d86a4a 100%)"></div>
</div>
<svg class="a" style="left:1676px;top:1px" width="22" height="19"><path d="M6,5 L15,13.5 M15,5 L6,13.5" stroke="#6a2a20" stroke-width="4.6"/><path d="M6,5 L15,13.5 M15,5 L6,13.5" stroke="#fff" stroke-width="3"/></svg>
<div class="a" style="left:1264px;top:153px;width:2px;height:24px;border-left:1px solid #c4d2de;border-right:1px solid #f4f8fb"></div>
<div class="a" style="left:1295px;top:153px;width:2px;height:24px;border-left:1px solid #c4d2de;border-right:1px solid #f4f8fb"></div>
<svg class="a" style="left:1270px;top:150px" width="20" height="30"><rect x="7.5" y="6.5" width="5" height="4" rx="1.5" fill="#dca8a8" stroke="#a87878"/><rect x="7.5" y="10.5" width="5" height="5" rx="1" fill="#f4f0a4" stroke="#a8a878"/><circle cx="9.7" cy="20.5" r="4.3" fill="#3cb43c" stroke="#0a600a" stroke-width="1.1"/><path d="M8,22 l3,-3 M9,23 l3,-3" stroke="#9ae89a" stroke-width="0.7"/></svg>
<div class="a" style="left:1395px;top:155px;width:310px;height:21px;background:#fff;border:1px solid #9ca8b2;border-radius:3px"></div>
<div class="a" style="left:1402px;top:157px;font-size:12px;color:#333;letter-spacing:1px">智能</div>
<svg class="a" style="left:1692px;top:160px" width="10" height="8"><path d="M1,2 h7 l-3.5,4z" fill="#222"/></svg>
<svg class="a" style="left:0;top:0;pointer-events:none" width="1716" height="1080"><path d="M154.7,951.7 L166.9,941.2 L168.7,944.7 L388.5,903.4 Q390,904.3 389,905.4 L171,953.4 L169.3,956.9 Z" fill="#e4261e" stroke="#e4261e" stroke-width="0.5" stroke-linejoin="miter"/></svg>
<div class="a" style="left:1261px;top:995px;font-size:42px;font-weight:bold;-webkit-text-stroke:0.4px #fff;text-shadow:1px 1px 0 #000,2px 2px 0 #000,3px 3px 1px rgba(0,0,0,.8);white-space:nowrap;color:#fff">头条</div>
<div class="a" style="left:1354px;top:994px;font-size:52px;-webkit-text-stroke:0.6px #fff;text-shadow:1px 1px 0 #000,2px 2px 0 #000,3px 3px 1px rgba(0,0,0,.8);white-space:nowrap;color:#fff">@</div>
<div class="a" style="left:1402px;top:994px;font-size:50px;-webkit-text-stroke:0.8px #fff;text-shadow:1px 1px 0 #000,2px 2px 0 #000,3px 3px 1px rgba(0,0,0,.8);white-space:nowrap;color:#fff">3D</div>
<div class="a" style="left:1469px;top:996px;font-size:43px;letter-spacing:0.6px;-webkit-text-stroke:0.8px #fff;text-shadow:1px 1px 0 #000,2px 2px 0 #000,3px 3px 1px rgba(0,0,0,.8);white-space:nowrap;color:#fff">设计点滴通</div>
</body></html>
